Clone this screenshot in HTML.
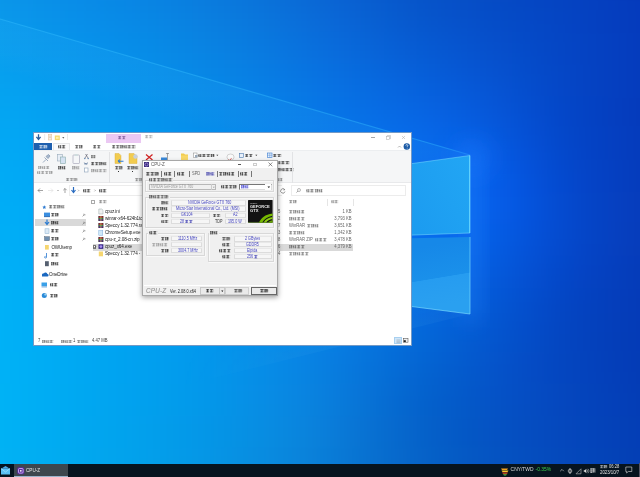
<!DOCTYPE html>
<html><head><meta charset="utf-8">
<style>
*{margin:0;padding:0;box-sizing:border-box}
html,body{width:640px;height:477px;overflow:hidden;background:#0870dc;font-family:"Liberation Sans",sans-serif}
.a{position:absolute}
.t{position:absolute;white-space:nowrap;font-family:"Liberation Sans",sans-serif}
</style></head><body>
<div class="a" style="left:0;top:0;width:640px;height:477px;overflow:hidden"><svg class="a" style="left:-64px;top:-64px;filter:blur(18px)" width="768" height="608" viewBox="-64 -64 768 608">
<rect x="-64" y="-64" width="32" height="32" fill="#0d97e9"/>
<rect x="-32" y="-64" width="32" height="32" fill="#0d93e7"/>
<rect x="0" y="-64" width="32" height="32" fill="#0c8ee6"/>
<rect x="32" y="-64" width="32" height="32" fill="#0c8ae4"/>
<rect x="64" y="-64" width="32" height="32" fill="#0b86e3"/>
<rect x="96" y="-64" width="32" height="32" fill="#0b82e1"/>
<rect x="128" y="-64" width="32" height="32" fill="#0b7edf"/>
<rect x="160" y="-64" width="32" height="32" fill="#0b7adc"/>
<rect x="192" y="-64" width="32" height="32" fill="#0b75da"/>
<rect x="224" y="-64" width="32" height="32" fill="#0b70d7"/>
<rect x="256" y="-64" width="32" height="32" fill="#0b6ad4"/>
<rect x="288" y="-64" width="32" height="32" fill="#0b64d1"/>
<rect x="320" y="-64" width="32" height="32" fill="#0a5ecd"/>
<rect x="352" y="-64" width="32" height="32" fill="#0959ca"/>
<rect x="384" y="-64" width="32" height="32" fill="#0853c7"/>
<rect x="416" y="-64" width="32" height="32" fill="#074fc4"/>
<rect x="448" y="-64" width="32" height="32" fill="#064bc2"/>
<rect x="480" y="-64" width="32" height="32" fill="#0647c1"/>
<rect x="512" y="-64" width="32" height="32" fill="#0644bf"/>
<rect x="544" y="-64" width="32" height="32" fill="#0641be"/>
<rect x="576" y="-64" width="32" height="32" fill="#063dbd"/>
<rect x="608" y="-64" width="32" height="32" fill="#063abb"/>
<rect x="640" y="-64" width="32" height="32" fill="#0636b8"/>
<rect x="672" y="-64" width="32" height="32" fill="#0632b5"/>
<rect x="-64" y="-32" width="32" height="32" fill="#0c9beb"/>
<rect x="-32" y="-32" width="32" height="32" fill="#0c96e9"/>
<rect x="0" y="-32" width="32" height="32" fill="#0b92e8"/>
<rect x="32" y="-32" width="32" height="32" fill="#0a8ee7"/>
<rect x="64" y="-32" width="32" height="32" fill="#0a8ae6"/>
<rect x="96" y="-32" width="32" height="32" fill="#0986e4"/>
<rect x="128" y="-32" width="32" height="32" fill="#0a82e2"/>
<rect x="160" y="-32" width="32" height="32" fill="#0a7edf"/>
<rect x="192" y="-32" width="32" height="32" fill="#0a79dd"/>
<rect x="224" y="-32" width="32" height="32" fill="#0b74da"/>
<rect x="256" y="-32" width="32" height="32" fill="#0b6ed7"/>
<rect x="288" y="-32" width="32" height="32" fill="#0b68d4"/>
<rect x="320" y="-32" width="32" height="32" fill="#0a62d1"/>
<rect x="352" y="-32" width="32" height="32" fill="#095cce"/>
<rect x="384" y="-32" width="32" height="32" fill="#0756ca"/>
<rect x="416" y="-32" width="32" height="32" fill="#0651c7"/>
<rect x="448" y="-32" width="32" height="32" fill="#064dc5"/>
<rect x="480" y="-32" width="32" height="32" fill="#0649c3"/>
<rect x="512" y="-32" width="32" height="32" fill="#0546c2"/>
<rect x="544" y="-32" width="32" height="32" fill="#0543c0"/>
<rect x="576" y="-32" width="32" height="32" fill="#053fbf"/>
<rect x="608" y="-32" width="32" height="32" fill="#053cbd"/>
<rect x="640" y="-32" width="32" height="32" fill="#0538ba"/>
<rect x="672" y="-32" width="32" height="32" fill="#0533b7"/>
<rect x="-64" y="0" width="32" height="32" fill="#0a9eed"/>
<rect x="-32" y="0" width="32" height="32" fill="#0a9aeb"/>
<rect x="0" y="0" width="32" height="32" fill="#0a96ea"/>
<rect x="32" y="0" width="32" height="32" fill="#0992e9"/>
<rect x="64" y="0" width="32" height="32" fill="#088ee9"/>
<rect x="96" y="0" width="32" height="32" fill="#088be7"/>
<rect x="128" y="0" width="32" height="32" fill="#0887e5"/>
<rect x="160" y="0" width="32" height="32" fill="#0983e2"/>
<rect x="192" y="0" width="32" height="32" fill="#0a7edf"/>
<rect x="224" y="0" width="32" height="32" fill="#0a79dd"/>
<rect x="256" y="0" width="32" height="32" fill="#0a73db"/>
<rect x="288" y="0" width="32" height="32" fill="#0a6dd9"/>
<rect x="320" y="0" width="32" height="32" fill="#0a66d6"/>
<rect x="352" y="0" width="32" height="32" fill="#0860d2"/>
<rect x="384" y="0" width="32" height="32" fill="#075ace"/>
<rect x="416" y="0" width="32" height="32" fill="#0654cb"/>
<rect x="448" y="0" width="32" height="32" fill="#0650c9"/>
<rect x="480" y="0" width="32" height="32" fill="#054cc7"/>
<rect x="512" y="0" width="32" height="32" fill="#0548c5"/>
<rect x="544" y="0" width="32" height="32" fill="#0545c3"/>
<rect x="576" y="0" width="32" height="32" fill="#0541c1"/>
<rect x="608" y="0" width="32" height="32" fill="#053dbe"/>
<rect x="640" y="0" width="32" height="32" fill="#0539bb"/>
<rect x="672" y="0" width="32" height="32" fill="#0534b7"/>
<rect x="-64" y="32" width="32" height="32" fill="#09a2ef"/>
<rect x="-32" y="32" width="32" height="32" fill="#089fee"/>
<rect x="0" y="32" width="32" height="32" fill="#089bed"/>
<rect x="32" y="32" width="32" height="32" fill="#0797ec"/>
<rect x="64" y="32" width="32" height="32" fill="#0793eb"/>
<rect x="96" y="32" width="32" height="32" fill="#078fea"/>
<rect x="128" y="32" width="32" height="32" fill="#078ce7"/>
<rect x="160" y="32" width="32" height="32" fill="#0888e5"/>
<rect x="192" y="32" width="32" height="32" fill="#0983e2"/>
<rect x="224" y="32" width="32" height="32" fill="#097ee1"/>
<rect x="256" y="32" width="32" height="32" fill="#0978df"/>
<rect x="288" y="32" width="32" height="32" fill="#0971de"/>
<rect x="320" y="32" width="32" height="32" fill="#096bdb"/>
<rect x="352" y="32" width="32" height="32" fill="#0865d8"/>
<rect x="384" y="32" width="32" height="32" fill="#075ed5"/>
<rect x="416" y="32" width="32" height="32" fill="#0659d2"/>
<rect x="448" y="32" width="32" height="32" fill="#0654cf"/>
<rect x="480" y="32" width="32" height="32" fill="#064fcb"/>
<rect x="512" y="32" width="32" height="32" fill="#054bc8"/>
<rect x="544" y="32" width="32" height="32" fill="#0546c5"/>
<rect x="576" y="32" width="32" height="32" fill="#0542c2"/>
<rect x="608" y="32" width="32" height="32" fill="#053ebf"/>
<rect x="640" y="32" width="32" height="32" fill="#0539bb"/>
<rect x="672" y="32" width="32" height="32" fill="#0535b7"/>
<rect x="-64" y="64" width="32" height="32" fill="#07a6f1"/>
<rect x="-32" y="64" width="32" height="32" fill="#06a3f0"/>
<rect x="0" y="64" width="32" height="32" fill="#069fef"/>
<rect x="32" y="64" width="32" height="32" fill="#069cee"/>
<rect x="64" y="64" width="32" height="32" fill="#0698ed"/>
<rect x="96" y="64" width="32" height="32" fill="#0694ec"/>
<rect x="128" y="64" width="32" height="32" fill="#0690ea"/>
<rect x="160" y="64" width="32" height="32" fill="#078ce8"/>
<rect x="192" y="64" width="32" height="32" fill="#0787e6"/>
<rect x="224" y="64" width="32" height="32" fill="#0882e5"/>
<rect x="256" y="64" width="32" height="32" fill="#087ce4"/>
<rect x="288" y="64" width="32" height="32" fill="#0876e3"/>
<rect x="320" y="64" width="32" height="32" fill="#0870e1"/>
<rect x="352" y="64" width="32" height="32" fill="#076adf"/>
<rect x="384" y="64" width="32" height="32" fill="#0764dc"/>
<rect x="416" y="64" width="32" height="32" fill="#065ed9"/>
<rect x="448" y="64" width="32" height="32" fill="#0658d6"/>
<rect x="480" y="64" width="32" height="32" fill="#0653d1"/>
<rect x="512" y="64" width="32" height="32" fill="#054dcc"/>
<rect x="544" y="64" width="32" height="32" fill="#0547c7"/>
<rect x="576" y="64" width="32" height="32" fill="#0542c2"/>
<rect x="608" y="64" width="32" height="32" fill="#053ebf"/>
<rect x="640" y="64" width="32" height="32" fill="#0539bb"/>
<rect x="672" y="64" width="32" height="32" fill="#0535b7"/>
<rect x="-64" y="96" width="32" height="32" fill="#05aaf4"/>
<rect x="-32" y="96" width="32" height="32" fill="#05a7f3"/>
<rect x="0" y="96" width="32" height="32" fill="#04a4f2"/>
<rect x="32" y="96" width="32" height="32" fill="#04a0f1"/>
<rect x="64" y="96" width="32" height="32" fill="#049cef"/>
<rect x="96" y="96" width="32" height="32" fill="#0498ee"/>
<rect x="128" y="96" width="32" height="32" fill="#0594ec"/>
<rect x="160" y="96" width="32" height="32" fill="#0690ea"/>
<rect x="192" y="96" width="32" height="32" fill="#068be9"/>
<rect x="224" y="96" width="32" height="32" fill="#0786e8"/>
<rect x="256" y="96" width="32" height="32" fill="#0780e8"/>
<rect x="288" y="96" width="32" height="32" fill="#077ae7"/>
<rect x="320" y="96" width="32" height="32" fill="#0774e6"/>
<rect x="352" y="96" width="32" height="32" fill="#076ee5"/>
<rect x="384" y="96" width="32" height="32" fill="#0769e4"/>
<rect x="416" y="96" width="32" height="32" fill="#0763e2"/>
<rect x="448" y="96" width="32" height="32" fill="#065dde"/>
<rect x="480" y="96" width="32" height="32" fill="#0656d8"/>
<rect x="512" y="96" width="32" height="32" fill="#054ed0"/>
<rect x="544" y="96" width="32" height="32" fill="#0447c9"/>
<rect x="576" y="96" width="32" height="32" fill="#0442c3"/>
<rect x="608" y="96" width="32" height="32" fill="#053dbe"/>
<rect x="640" y="96" width="32" height="32" fill="#0539ba"/>
<rect x="672" y="96" width="32" height="32" fill="#0535b6"/>
<rect x="-64" y="128" width="32" height="32" fill="#03adf5"/>
<rect x="-32" y="128" width="32" height="32" fill="#03aaf4"/>
<rect x="0" y="128" width="32" height="32" fill="#03a7f4"/>
<rect x="32" y="128" width="32" height="32" fill="#03a3f2"/>
<rect x="64" y="128" width="32" height="32" fill="#039ff1"/>
<rect x="96" y="128" width="32" height="32" fill="#039bf0"/>
<rect x="128" y="128" width="32" height="32" fill="#0497ee"/>
<rect x="160" y="128" width="32" height="32" fill="#0593ed"/>
<rect x="192" y="128" width="32" height="32" fill="#058eec"/>
<rect x="224" y="128" width="32" height="32" fill="#0689eb"/>
<rect x="256" y="128" width="32" height="32" fill="#0684eb"/>
<rect x="288" y="128" width="32" height="32" fill="#067eeb"/>
<rect x="320" y="128" width="32" height="32" fill="#0778eb"/>
<rect x="352" y="128" width="32" height="32" fill="#0773eb"/>
<rect x="384" y="128" width="32" height="32" fill="#076deb"/>
<rect x="416" y="128" width="32" height="32" fill="#0768ea"/>
<rect x="448" y="128" width="32" height="32" fill="#0661e6"/>
<rect x="480" y="128" width="32" height="32" fill="#065ae0"/>
<rect x="512" y="128" width="32" height="32" fill="#0550d6"/>
<rect x="544" y="128" width="32" height="32" fill="#0448cb"/>
<rect x="576" y="128" width="32" height="32" fill="#0442c4"/>
<rect x="608" y="128" width="32" height="32" fill="#053ebf"/>
<rect x="640" y="128" width="32" height="32" fill="#0539ba"/>
<rect x="672" y="128" width="32" height="32" fill="#0635b6"/>
<rect x="-64" y="160" width="32" height="32" fill="#02b0f7"/>
<rect x="-32" y="160" width="32" height="32" fill="#01adf6"/>
<rect x="0" y="160" width="32" height="32" fill="#01a9f5"/>
<rect x="32" y="160" width="32" height="32" fill="#01a6f4"/>
<rect x="64" y="160" width="32" height="32" fill="#02a2f3"/>
<rect x="96" y="160" width="32" height="32" fill="#029ef1"/>
<rect x="128" y="160" width="32" height="32" fill="#039af0"/>
<rect x="160" y="160" width="32" height="32" fill="#0495ef"/>
<rect x="192" y="160" width="32" height="32" fill="#0491ee"/>
<rect x="224" y="160" width="32" height="32" fill="#058cee"/>
<rect x="256" y="160" width="32" height="32" fill="#0586ee"/>
<rect x="288" y="160" width="32" height="32" fill="#0681ee"/>
<rect x="320" y="160" width="32" height="32" fill="#067bee"/>
<rect x="352" y="160" width="32" height="32" fill="#0676ef"/>
<rect x="384" y="160" width="32" height="32" fill="#0670ef"/>
<rect x="416" y="160" width="32" height="32" fill="#066bef"/>
<rect x="448" y="160" width="32" height="32" fill="#0665ee"/>
<rect x="480" y="160" width="32" height="32" fill="#065de8"/>
<rect x="512" y="160" width="32" height="32" fill="#0553dc"/>
<rect x="544" y="160" width="32" height="32" fill="#044acf"/>
<rect x="576" y="160" width="32" height="32" fill="#0543c6"/>
<rect x="608" y="160" width="32" height="32" fill="#053ebf"/>
<rect x="640" y="160" width="32" height="32" fill="#063aba"/>
<rect x="672" y="160" width="32" height="32" fill="#0635b5"/>
<rect x="-64" y="192" width="32" height="32" fill="#01b2f8"/>
<rect x="-32" y="192" width="32" height="32" fill="#00aff7"/>
<rect x="0" y="192" width="32" height="32" fill="#00acf6"/>
<rect x="32" y="192" width="32" height="32" fill="#00a8f5"/>
<rect x="64" y="192" width="32" height="32" fill="#01a4f4"/>
<rect x="96" y="192" width="32" height="32" fill="#01a0f2"/>
<rect x="128" y="192" width="32" height="32" fill="#029cf1"/>
<rect x="160" y="192" width="32" height="32" fill="#0398f0"/>
<rect x="192" y="192" width="32" height="32" fill="#0493f0"/>
<rect x="224" y="192" width="32" height="32" fill="#048eef"/>
<rect x="256" y="192" width="32" height="32" fill="#0588ef"/>
<rect x="288" y="192" width="32" height="32" fill="#0683ef"/>
<rect x="320" y="192" width="32" height="32" fill="#067def"/>
<rect x="352" y="192" width="32" height="32" fill="#0678f0"/>
<rect x="384" y="192" width="32" height="32" fill="#0672f0"/>
<rect x="416" y="192" width="32" height="32" fill="#066cf1"/>
<rect x="448" y="192" width="32" height="32" fill="#0666ef"/>
<rect x="480" y="192" width="32" height="32" fill="#065eea"/>
<rect x="512" y="192" width="32" height="32" fill="#0554de"/>
<rect x="544" y="192" width="32" height="32" fill="#054bd1"/>
<rect x="576" y="192" width="32" height="32" fill="#0544c7"/>
<rect x="608" y="192" width="32" height="32" fill="#063fbf"/>
<rect x="640" y="192" width="32" height="32" fill="#063aba"/>
<rect x="672" y="192" width="32" height="32" fill="#0636b5"/>
<rect x="-64" y="224" width="32" height="32" fill="#00b4f8"/>
<rect x="-32" y="224" width="32" height="32" fill="#00b0f7"/>
<rect x="0" y="224" width="32" height="32" fill="#00adf6"/>
<rect x="32" y="224" width="32" height="32" fill="#00a9f5"/>
<rect x="64" y="224" width="32" height="32" fill="#00a6f4"/>
<rect x="96" y="224" width="32" height="32" fill="#01a2f3"/>
<rect x="128" y="224" width="32" height="32" fill="#019ef2"/>
<rect x="160" y="224" width="32" height="32" fill="#0299f1"/>
<rect x="192" y="224" width="32" height="32" fill="#0394f0"/>
<rect x="224" y="224" width="32" height="32" fill="#048fef"/>
<rect x="256" y="224" width="32" height="32" fill="#058aef"/>
<rect x="288" y="224" width="32" height="32" fill="#0584ef"/>
<rect x="320" y="224" width="32" height="32" fill="#067eee"/>
<rect x="352" y="224" width="32" height="32" fill="#0678ee"/>
<rect x="384" y="224" width="32" height="32" fill="#0672ee"/>
<rect x="416" y="224" width="32" height="32" fill="#066ced"/>
<rect x="448" y="224" width="32" height="32" fill="#0665eb"/>
<rect x="480" y="224" width="32" height="32" fill="#055de4"/>
<rect x="512" y="224" width="32" height="32" fill="#0553da"/>
<rect x="544" y="224" width="32" height="32" fill="#054bcf"/>
<rect x="576" y="224" width="32" height="32" fill="#0544c5"/>
<rect x="608" y="224" width="32" height="32" fill="#063fbe"/>
<rect x="640" y="224" width="32" height="32" fill="#063ab9"/>
<rect x="672" y="224" width="32" height="32" fill="#0636b4"/>
<rect x="-64" y="256" width="32" height="32" fill="#00b5f9"/>
<rect x="-32" y="256" width="32" height="32" fill="#00b2f8"/>
<rect x="0" y="256" width="32" height="32" fill="#00aef7"/>
<rect x="32" y="256" width="32" height="32" fill="#00abf5"/>
<rect x="64" y="256" width="32" height="32" fill="#00a7f4"/>
<rect x="96" y="256" width="32" height="32" fill="#00a3f3"/>
<rect x="128" y="256" width="32" height="32" fill="#019ff2"/>
<rect x="160" y="256" width="32" height="32" fill="#029af1"/>
<rect x="192" y="256" width="32" height="32" fill="#0396f0"/>
<rect x="224" y="256" width="32" height="32" fill="#0490ef"/>
<rect x="256" y="256" width="32" height="32" fill="#058bee"/>
<rect x="288" y="256" width="32" height="32" fill="#0585ed"/>
<rect x="320" y="256" width="32" height="32" fill="#067fec"/>
<rect x="352" y="256" width="32" height="32" fill="#0678ea"/>
<rect x="384" y="256" width="32" height="32" fill="#0571e9"/>
<rect x="416" y="256" width="32" height="32" fill="#056ae7"/>
<rect x="448" y="256" width="32" height="32" fill="#0562e3"/>
<rect x="480" y="256" width="32" height="32" fill="#055adc"/>
<rect x="512" y="256" width="32" height="32" fill="#0551d3"/>
<rect x="544" y="256" width="32" height="32" fill="#0448ca"/>
<rect x="576" y="256" width="32" height="32" fill="#0542c2"/>
<rect x="608" y="256" width="32" height="32" fill="#053ebc"/>
<rect x="640" y="256" width="32" height="32" fill="#0639b7"/>
<rect x="672" y="256" width="32" height="32" fill="#0635b3"/>
<rect x="-64" y="288" width="32" height="32" fill="#00b6f9"/>
<rect x="-32" y="288" width="32" height="32" fill="#00b3f8"/>
<rect x="0" y="288" width="32" height="32" fill="#00aff6"/>
<rect x="32" y="288" width="32" height="32" fill="#00abf5"/>
<rect x="64" y="288" width="32" height="32" fill="#00a8f4"/>
<rect x="96" y="288" width="32" height="32" fill="#00a4f3"/>
<rect x="128" y="288" width="32" height="32" fill="#01a0f1"/>
<rect x="160" y="288" width="32" height="32" fill="#029bf0"/>
<rect x="192" y="288" width="32" height="32" fill="#0396ef"/>
<rect x="224" y="288" width="32" height="32" fill="#0491ed"/>
<rect x="256" y="288" width="32" height="32" fill="#058bec"/>
<rect x="288" y="288" width="32" height="32" fill="#0685ea"/>
<rect x="320" y="288" width="32" height="32" fill="#067ee8"/>
<rect x="352" y="288" width="32" height="32" fill="#0677e5"/>
<rect x="384" y="288" width="32" height="32" fill="#056fe2"/>
<rect x="416" y="288" width="32" height="32" fill="#0567df"/>
<rect x="448" y="288" width="32" height="32" fill="#045fda"/>
<rect x="480" y="288" width="32" height="32" fill="#0457d4"/>
<rect x="512" y="288" width="32" height="32" fill="#044ecd"/>
<rect x="544" y="288" width="32" height="32" fill="#0446c4"/>
<rect x="576" y="288" width="32" height="32" fill="#0441be"/>
<rect x="608" y="288" width="32" height="32" fill="#053dba"/>
<rect x="640" y="288" width="32" height="32" fill="#0539b6"/>
<rect x="672" y="288" width="32" height="32" fill="#0535b2"/>
<rect x="-64" y="320" width="32" height="32" fill="#00b7f9"/>
<rect x="-32" y="320" width="32" height="32" fill="#00b3f7"/>
<rect x="0" y="320" width="32" height="32" fill="#00aff6"/>
<rect x="32" y="320" width="32" height="32" fill="#00acf5"/>
<rect x="64" y="320" width="32" height="32" fill="#00a8f3"/>
<rect x="96" y="320" width="32" height="32" fill="#00a4f2"/>
<rect x="128" y="320" width="32" height="32" fill="#01a0f0"/>
<rect x="160" y="320" width="32" height="32" fill="#029cef"/>
<rect x="192" y="320" width="32" height="32" fill="#0397ed"/>
<rect x="224" y="320" width="32" height="32" fill="#0491eb"/>
<rect x="256" y="320" width="32" height="32" fill="#068be9"/>
<rect x="288" y="320" width="32" height="32" fill="#0785e6"/>
<rect x="320" y="320" width="32" height="32" fill="#077de3"/>
<rect x="352" y="320" width="32" height="32" fill="#0675df"/>
<rect x="384" y="320" width="32" height="32" fill="#056ddb"/>
<rect x="416" y="320" width="32" height="32" fill="#0465d7"/>
<rect x="448" y="320" width="32" height="32" fill="#045dd3"/>
<rect x="480" y="320" width="32" height="32" fill="#0455ce"/>
<rect x="512" y="320" width="32" height="32" fill="#044dc8"/>
<rect x="544" y="320" width="32" height="32" fill="#0446c1"/>
<rect x="576" y="320" width="32" height="32" fill="#0441bc"/>
<rect x="608" y="320" width="32" height="32" fill="#043db8"/>
<rect x="640" y="320" width="32" height="32" fill="#0539b5"/>
<rect x="672" y="320" width="32" height="32" fill="#0535b1"/>
<rect x="-64" y="352" width="32" height="32" fill="#00b7f8"/>
<rect x="-32" y="352" width="32" height="32" fill="#00b3f7"/>
<rect x="0" y="352" width="32" height="32" fill="#00b0f5"/>
<rect x="32" y="352" width="32" height="32" fill="#00acf4"/>
<rect x="64" y="352" width="32" height="32" fill="#00a8f2"/>
<rect x="96" y="352" width="32" height="32" fill="#00a4f1"/>
<rect x="128" y="352" width="32" height="32" fill="#01a0ef"/>
<rect x="160" y="352" width="32" height="32" fill="#029ced"/>
<rect x="192" y="352" width="32" height="32" fill="#0397eb"/>
<rect x="224" y="352" width="32" height="32" fill="#0591e9"/>
<rect x="256" y="352" width="32" height="32" fill="#078be6"/>
<rect x="288" y="352" width="32" height="32" fill="#0884e3"/>
<rect x="320" y="352" width="32" height="32" fill="#087cdf"/>
<rect x="352" y="352" width="32" height="32" fill="#0673da"/>
<rect x="384" y="352" width="32" height="32" fill="#056ad5"/>
<rect x="416" y="352" width="32" height="32" fill="#0462d0"/>
<rect x="448" y="352" width="32" height="32" fill="#045acd"/>
<rect x="480" y="352" width="32" height="32" fill="#0553ca"/>
<rect x="512" y="352" width="32" height="32" fill="#054cc5"/>
<rect x="544" y="352" width="32" height="32" fill="#0446c0"/>
<rect x="576" y="352" width="32" height="32" fill="#0442bc"/>
<rect x="608" y="352" width="32" height="32" fill="#043db8"/>
<rect x="640" y="352" width="32" height="32" fill="#043ab4"/>
<rect x="672" y="352" width="32" height="32" fill="#0436b1"/>
<rect x="-64" y="384" width="32" height="32" fill="#00b8f8"/>
<rect x="-32" y="384" width="32" height="32" fill="#00b4f6"/>
<rect x="0" y="384" width="32" height="32" fill="#00b0f5"/>
<rect x="32" y="384" width="32" height="32" fill="#00acf3"/>
<rect x="64" y="384" width="32" height="32" fill="#00a8f1"/>
<rect x="96" y="384" width="32" height="32" fill="#01a4f0"/>
<rect x="128" y="384" width="32" height="32" fill="#01a0ee"/>
<rect x="160" y="384" width="32" height="32" fill="#029cec"/>
<rect x="192" y="384" width="32" height="32" fill="#0397e9"/>
<rect x="224" y="384" width="32" height="32" fill="#0691e7"/>
<rect x="256" y="384" width="32" height="32" fill="#088be4"/>
<rect x="288" y="384" width="32" height="32" fill="#0984e0"/>
<rect x="320" y="384" width="32" height="32" fill="#097cdb"/>
<rect x="352" y="384" width="32" height="32" fill="#0772d6"/>
<rect x="384" y="384" width="32" height="32" fill="#0568d0"/>
<rect x="416" y="384" width="32" height="32" fill="#045fcb"/>
<rect x="448" y="384" width="32" height="32" fill="#0459c9"/>
<rect x="480" y="384" width="32" height="32" fill="#0552c6"/>
<rect x="512" y="384" width="32" height="32" fill="#054dc3"/>
<rect x="544" y="384" width="32" height="32" fill="#0547bf"/>
<rect x="576" y="384" width="32" height="32" fill="#0443bb"/>
<rect x="608" y="384" width="32" height="32" fill="#043fb8"/>
<rect x="640" y="384" width="32" height="32" fill="#043bb4"/>
<rect x="672" y="384" width="32" height="32" fill="#0436b1"/>
<rect x="-64" y="416" width="32" height="32" fill="#00b8f7"/>
<rect x="-32" y="416" width="32" height="32" fill="#00b4f5"/>
<rect x="0" y="416" width="32" height="32" fill="#00b0f4"/>
<rect x="32" y="416" width="32" height="32" fill="#00acf2"/>
<rect x="64" y="416" width="32" height="32" fill="#01a8f0"/>
<rect x="96" y="416" width="32" height="32" fill="#01a4ee"/>
<rect x="128" y="416" width="32" height="32" fill="#02a0ec"/>
<rect x="160" y="416" width="32" height="32" fill="#039bea"/>
<rect x="192" y="416" width="32" height="32" fill="#0496e7"/>
<rect x="224" y="416" width="32" height="32" fill="#0691e4"/>
<rect x="256" y="416" width="32" height="32" fill="#088be1"/>
<rect x="288" y="416" width="32" height="32" fill="#0a84dd"/>
<rect x="320" y="416" width="32" height="32" fill="#0a7bd8"/>
<rect x="352" y="416" width="32" height="32" fill="#0871d2"/>
<rect x="384" y="416" width="32" height="32" fill="#0668cd"/>
<rect x="416" y="416" width="32" height="32" fill="#055fc8"/>
<rect x="448" y="416" width="32" height="32" fill="#0458c6"/>
<rect x="480" y="416" width="32" height="32" fill="#0552c3"/>
<rect x="512" y="416" width="32" height="32" fill="#054dc0"/>
<rect x="544" y="416" width="32" height="32" fill="#0548bd"/>
<rect x="576" y="416" width="32" height="32" fill="#0444ba"/>
<rect x="608" y="416" width="32" height="32" fill="#0440b7"/>
<rect x="640" y="416" width="32" height="32" fill="#043cb4"/>
<rect x="672" y="416" width="32" height="32" fill="#0437b0"/>
<rect x="-64" y="448" width="32" height="32" fill="#00b9f6"/>
<rect x="-32" y="448" width="32" height="32" fill="#00b4f5"/>
<rect x="0" y="448" width="32" height="32" fill="#01b0f3"/>
<rect x="32" y="448" width="32" height="32" fill="#01acf1"/>
<rect x="64" y="448" width="32" height="32" fill="#01a8ef"/>
<rect x="96" y="448" width="32" height="32" fill="#02a4ed"/>
<rect x="128" y="448" width="32" height="32" fill="#02a0ea"/>
<rect x="160" y="448" width="32" height="32" fill="#049be8"/>
<rect x="192" y="448" width="32" height="32" fill="#0596e5"/>
<rect x="224" y="448" width="32" height="32" fill="#0790e2"/>
<rect x="256" y="448" width="32" height="32" fill="#098ade"/>
<rect x="288" y="448" width="32" height="32" fill="#0a83da"/>
<rect x="320" y="448" width="32" height="32" fill="#097ad5"/>
<rect x="352" y="448" width="32" height="32" fill="#0871d0"/>
<rect x="384" y="448" width="32" height="32" fill="#0768cb"/>
<rect x="416" y="448" width="32" height="32" fill="#0560c7"/>
<rect x="448" y="448" width="32" height="32" fill="#0559c4"/>
<rect x="480" y="448" width="32" height="32" fill="#0553c1"/>
<rect x="512" y="448" width="32" height="32" fill="#054ebf"/>
<rect x="544" y="448" width="32" height="32" fill="#0549bc"/>
<rect x="576" y="448" width="32" height="32" fill="#0445b9"/>
<rect x="608" y="448" width="32" height="32" fill="#0441b6"/>
<rect x="640" y="448" width="32" height="32" fill="#043cb3"/>
<rect x="672" y="448" width="32" height="32" fill="#0438b0"/>
<rect x="-64" y="480" width="32" height="32" fill="#00b9f6"/>
<rect x="-32" y="480" width="32" height="32" fill="#01b5f4"/>
<rect x="0" y="480" width="32" height="32" fill="#01b1f2"/>
<rect x="32" y="480" width="32" height="32" fill="#01acf0"/>
<rect x="64" y="480" width="32" height="32" fill="#02a8ed"/>
<rect x="96" y="480" width="32" height="32" fill="#02a4eb"/>
<rect x="128" y="480" width="32" height="32" fill="#039fe9"/>
<rect x="160" y="480" width="32" height="32" fill="#049ae6"/>
<rect x="192" y="480" width="32" height="32" fill="#0695e3"/>
<rect x="224" y="480" width="32" height="32" fill="#078fe0"/>
<rect x="256" y="480" width="32" height="32" fill="#0889dc"/>
<rect x="288" y="480" width="32" height="32" fill="#0982d8"/>
<rect x="320" y="480" width="32" height="32" fill="#097ad3"/>
<rect x="352" y="480" width="32" height="32" fill="#0871ce"/>
<rect x="384" y="480" width="32" height="32" fill="#0769ca"/>
<rect x="416" y="480" width="32" height="32" fill="#0661c6"/>
<rect x="448" y="480" width="32" height="32" fill="#055ac2"/>
<rect x="480" y="480" width="32" height="32" fill="#0554c0"/>
<rect x="512" y="480" width="32" height="32" fill="#054fbd"/>
<rect x="544" y="480" width="32" height="32" fill="#054abb"/>
<rect x="576" y="480" width="32" height="32" fill="#0446b8"/>
<rect x="608" y="480" width="32" height="32" fill="#0442b5"/>
<rect x="640" y="480" width="32" height="32" fill="#043db2"/>
<rect x="672" y="480" width="32" height="32" fill="#0439af"/>
<rect x="-64" y="512" width="32" height="32" fill="#01baf5"/>
<rect x="-32" y="512" width="32" height="32" fill="#01b5f3"/>
<rect x="0" y="512" width="32" height="32" fill="#01b1f1"/>
<rect x="32" y="512" width="32" height="32" fill="#02adee"/>
<rect x="64" y="512" width="32" height="32" fill="#02a8ec"/>
<rect x="96" y="512" width="32" height="32" fill="#03a4ea"/>
<rect x="128" y="512" width="32" height="32" fill="#049fe7"/>
<rect x="160" y="512" width="32" height="32" fill="#059ae4"/>
<rect x="192" y="512" width="32" height="32" fill="#0695e1"/>
<rect x="224" y="512" width="32" height="32" fill="#078fde"/>
<rect x="256" y="512" width="32" height="32" fill="#0888da"/>
<rect x="288" y="512" width="32" height="32" fill="#0981d6"/>
<rect x="320" y="512" width="32" height="32" fill="#097ad1"/>
<rect x="352" y="512" width="32" height="32" fill="#0872cd"/>
<rect x="384" y="512" width="32" height="32" fill="#076ac9"/>
<rect x="416" y="512" width="32" height="32" fill="#0663c5"/>
<rect x="448" y="512" width="32" height="32" fill="#065cc2"/>
<rect x="480" y="512" width="32" height="32" fill="#0556bf"/>
<rect x="512" y="512" width="32" height="32" fill="#0550bc"/>
<rect x="544" y="512" width="32" height="32" fill="#054cb9"/>
<rect x="576" y="512" width="32" height="32" fill="#0447b7"/>
<rect x="608" y="512" width="32" height="32" fill="#0442b4"/>
<rect x="640" y="512" width="32" height="32" fill="#043eb1"/>
<rect x="672" y="512" width="32" height="32" fill="#043aae"/>
</svg></div>
<svg class="a" style="left:0;top:0" width="640" height="477" viewBox="0 0 640 477">
  <defs>
    <linearGradient id="w1" gradientUnits="userSpaceOnUse" x1="235" y1="87" x2="221" y2="135">
      <stop offset="0" stop-color="#40c0ff" stop-opacity=".10"/><stop offset="1" stop-color="#9fe0ff" stop-opacity="0"/>
    </linearGradient>
    <linearGradient id="w2" gradientUnits="userSpaceOnUse" x1="235" y1="372.75" x2="223" y2="324">
      <stop offset="0" stop-color="#9fe0ff" stop-opacity=".05"/><stop offset="1" stop-color="#9fe0ff" stop-opacity="0"/>
    </linearGradient>
    <linearGradient id="up" gradientUnits="userSpaceOnUse" x1="470" y1="155" x2="330" y2="235">
      <stop offset="0" stop-color="#22a6f4"/><stop offset=".5" stop-color="#1c9cf0"/><stop offset="1" stop-color="#1894ec"/>
    </linearGradient>
    <linearGradient id="lo" gradientUnits="userSpaceOnUse" x1="400" y1="250" x2="410" y2="310">
      <stop offset="0" stop-color="#1688e8"/><stop offset=".55" stop-color="#1a90ea"/><stop offset=".56" stop-color="#269cf0"/><stop offset="1" stop-color="#2aa0f0"/>
    </linearGradient>
    <linearGradient id="m2g" gradientUnits="userSpaceOnUse" x1="180" y1="0" x2="330" y2="0"><stop offset="0" stop-color="#fff" stop-opacity="0"/><stop offset="1" stop-color="#fff" stop-opacity="1"/></linearGradient>
    <mask id="m2" maskUnits="userSpaceOnUse" x="0" y="0" width="640" height="477"><rect x="0" y="0" width="640" height="477" fill="url(#m2g)"/></mask>
    <filter id="gl" x="-50%" y="-20%" width="200%" height="140%"><feGaussianBlur stdDeviation="11"/></filter>
    <filter id="sl" x="-5%" y="-50%" width="110%" height="200%"><feGaussianBlur stdDeviation=".6"/></filter>
  </defs>
  <polygon points="0,19 470,155 0,230" fill="url(#w1)"/>
  <polygon points="470,314 0,250 0,431.5" fill="url(#w2)" mask="url(#m2)"/>
  <line x1="0" y1="19" x2="470" y2="155" stroke="#38c0ff" stroke-width="1.3" opacity=".4" filter="url(#sl)"/>
  <rect x="460" y="150" width="20" height="170" fill="#2a8aff" opacity=".35" filter="url(#gl)"/>
  <circle cx="472" cy="158" r="22" fill="#1a78ff" opacity=".3" filter="url(#gl)"/>
  <polygon points="330,175 470,155.5 470,233 330,238" fill="url(#up)"/>
  <polygon points="330,240 470,237 470,314 330,296" fill="url(#lo)"/>
  <polygon points="330,175 470,155.5 470,233 330,238" fill="none" stroke="#80e0ff" stroke-width=".9" opacity=".55"/>
  <polyline points="330,296 470,314 470,237" fill="none" stroke="#80e0ff" stroke-width=".9" opacity=".7"/>
  <line x1="469.6" y1="155.5" x2="469.6" y2="233" stroke="#70dcff" stroke-width="1" opacity=".8"/>
</svg>

<div class="a" style="left:0;top:0;width:640px;height:477px;filter:blur(.3px)">
<div class="a" style="left:32.6px;top:132px;width:379.4px;height:214px;background:#fff;border:1px solid rgba(0,70,150,.55)"></div>
<svg class="a" style="left:34px;top:133px" width="40" height="9" viewBox="0 0 40 9"><path d="M4.5 1.2v4.3M2.4 3.9l2.1 2.6 2.1-2.6" stroke="#2d5f9e" stroke-width="1.3" fill="none"/><rect x="10.5" y="1" width="0.6" height="6" fill="#ddd"/><rect x="14.3" y="1.5" width="3.4" height="5.5" fill="#f6ede2" stroke="#e2c4a4" stroke-width=".6"/><path d="M15 3.2h2M15 4.5h2" stroke="#d0b090" stroke-width=".4"/><rect x="20.8" y="2.5" width="5" height="4.6" fill="#f2da70"/><rect x="22" y="3.8" width="2.6" height="2" fill="#fff2b0"/><path d="M28.2 4.2h2.2l-1.1 1.4z" fill="#333"/><rect x="33" y="1" width="0.6" height="6" fill="#ddd"/></svg>
<div class="a" style="left:106.2px;top:134.3px;width:34.4px;height:8.6px;background:#ebc8f3"></div>
<svg class="a" style="left:118px;top:136.40px" width="9.00" height="3.70"><g transform="scale(0.952,0.889) translate(-0.0,0)"><rect x="0.0" width="8.40" height="3.6" fill="url(#p0)" opacity="0.78"/></g></svg>
<svg class="a" style="left:145px;top:135.40px" width="8.60" height="3.70"><g transform="scale(0.905,0.889) translate(-0.0,0)"><rect x="0.0" width="8.40" height="3.6" fill="url(#p1)" opacity="0.39"/></g></svg>
<div class="a" style="left:371px;top:137.2px;width:3.8px;height:0.5px;background:#a8a8a8"></div>
<svg class="a" style="left:385.5px;top:134.8px" width="5" height="5" viewBox="0 0 5 5"><rect x=".5" y="1.3" width="3.2" height="3.2" fill="none" stroke="#aaa" stroke-width=".5"/><path d="M1.3 1.3V.5h3.2v3.2h-.8" fill="none" stroke="#aaa" stroke-width=".5"/></svg>
<svg class="a" style="left:401px;top:135px" width="5" height="5" viewBox="0 0 5 5"><path d="M1 1l3 3M4 1L1 4" stroke="#a8a8a8" stroke-width=".5"/></svg>
<div class="a" style="left:33.6px;top:142.6px;width:18.8px;height:7.3px;background:#1e5fae"></div>
<svg class="a" style="left:39px;top:144.80px" width="9.40" height="3.90"><g transform="scale(1.000,0.944) translate(-4.2,0)"><rect x="4.2" width="8.40" height="3.6" fill="url(#p2)" opacity="1.00"/></g></svg>
<div class="a" style="left:53px;top:143px;width:16.5px;height:7.5px;background:#fbfbfc;border:0.5px solid #e6e7e9;border-bottom:none"></div>
<svg class="a" style="left:57.5px;top:144.80px" width="8.80" height="3.90"><g transform="scale(0.929,0.944) translate(-12.6,0)"><rect x="12.6" width="8.40" height="3.6" fill="url(#p1)" opacity="0.85"/></g></svg>
<svg class="a" style="left:75px;top:144.80px" width="9.00" height="3.90"><g transform="scale(0.952,0.944) translate(-4.2,0)"><rect x="4.2" width="8.40" height="3.6" fill="url(#p1)" opacity="0.78"/></g></svg>
<svg class="a" style="left:92.5px;top:144.80px" width="9.00" height="3.90"><g transform="scale(0.952,0.944) translate(-0.0,0)"><rect x="0.0" width="8.40" height="3.6" fill="url(#p1)" opacity="0.78"/></g></svg>
<svg class="a" style="left:112px;top:144.80px" width="24.40" height="3.90"><g transform="scale(0.929,0.944) translate(-0.0,0)"><rect x="0.0" width="25.20" height="3.6" fill="url(#p1)" opacity="0.78"/></g></svg>
<div class="a" style="left:34px;top:150px;width:377px;height:33.4px;background:#f5f6f7;border-top:0.5px solid #eceef0;border-bottom:0.5px solid #e8e9eb"></div>
<svg class="a" style="left:36px;top:152px" width="74" height="22" viewBox="0 0 74 22"><path d="M7 10.5l3-3M8.5 5.5l3.5 3.5M10 4.5l2 2 2-2.5-1.5-1.5z" stroke="#8fa0b8" stroke-width=".9" fill="#a8b8cc"/><rect x="21.5" y="2.5" width="5" height="6.5" fill="#e8eef6" stroke="#9ab" stroke-width=".6"/><rect x="24.5" y="5" width="5" height="6.5" fill="#d4e2f2" stroke="#8aa" stroke-width=".6"/><rect x="37" y="3" width="6.5" height="8.5" rx=".6" fill="#f4f6f8" stroke="#aab" stroke-width=".7"/><rect x="38.8" y="2.3" width="3" height="1.6" fill="#cdd"/><path d="M49 6l2.5-4M52 6l-2.5-4" stroke="#556" stroke-width=".6"/><circle cx="48.8" cy="6.5" r=".8" fill="#6a8ab0"/><circle cx="52.2" cy="6.5" r=".8" fill="#6a8ab0"/><path d="M48.3 10.5l.8 2 .8-1.5.8 1.5.8-2" stroke="#3a5a88" stroke-width=".6" fill="none"/><rect x="48.5" y="16" width="3.5" height="4" fill="#fff" stroke="#8aa0b8" stroke-width=".6"/></svg>
<svg class="a" style="left:38px;top:165.80px" width="13.00" height="3.70"><g transform="scale(0.952,0.889) translate(-8.4,0)"><rect x="8.4" width="12.60" height="3.6" fill="url(#p1)" opacity="0.43"/></g></svg>
<svg class="a" style="left:37.4px;top:170.80px" width="17.00" height="3.70"><g transform="scale(0.952,0.889) translate(-12.6,0)"><rect x="12.6" width="16.80" height="3.6" fill="url(#p1)" opacity="0.43"/></g></svg>
<svg class="a" style="left:57.5px;top:166.30px" width="9.00" height="3.90"><g transform="scale(0.952,0.944) translate(-8.4,0)"><rect x="8.4" width="8.40" height="3.6" fill="url(#p1)" opacity="0.85"/></g></svg>
<svg class="a" style="left:71.8px;top:166.30px" width="8.60" height="3.90"><g transform="scale(0.905,0.944) translate(-8.4,0)"><rect x="8.4" width="8.40" height="3.6" fill="url(#p1)" opacity="0.46"/></g></svg>
<svg class="a" style="left:90.5px;top:154.90px" width="5.40" height="3.70"><g transform="scale(0.524,0.889) translate(-0.0,0)"><rect x="0.0" width="8.40" height="3.6" fill="url(#p1)" opacity="0.85"/></g></svg>
<svg class="a" style="left:90.5px;top:162.00px" width="16.60" height="3.70"><g transform="scale(0.929,0.889) translate(-0.0,0)"><rect x="0.0" width="16.80" height="3.6" fill="url(#p1)" opacity="0.85"/></g></svg>
<svg class="a" style="left:90.5px;top:168.90px" width="16.60" height="3.70"><g transform="scale(0.929,0.889) translate(-8.4,0)"><rect x="8.4" width="16.80" height="3.6" fill="url(#p1)" opacity="0.46"/></g></svg>
<svg class="a" style="left:66px;top:177.70px" width="12.40" height="3.70"><g transform="scale(0.905,0.889) translate(-0.0,0)"><rect x="0.0" width="12.60" height="3.6" fill="url(#p1)" opacity="0.54"/></g></svg>
<div class="a" style="left:108.6px;top:152px;width:0.6px;height:31px;background:#e2e3e5"></div>
<svg class="a" style="left:112px;top:152px" width="80" height="12" viewBox="0 0 80 12"><path d="M3 1.5h4l2 2v8h-6z" fill="#f2cc50" stroke="#d8a830" stroke-width=".4"/><path d="M6 9.2h5.5M6 9.2l1.8-1.5M6 9.2l1.8 1.5" stroke="#2a7ad8" stroke-width="1.1" fill="none"/><path d="M17 1.5h5l3 3v7h-8z" fill="#f2cc50" stroke="#d8a830" stroke-width=".4"/><circle cx="23.5" cy="4.5" r="2.2" fill="#c8d0dc"/><path d="M34 2.5l6.5 5.5M40.5 2.5l-6.5 5.5" stroke="#d02020" stroke-width="1.2"/><rect x="49" y="5.5" width="6" height="3" fill="#3a88d8"/><path d="M55.5 1.5v8M54 1.5h3M54 9.5h3" stroke="#555" stroke-width=".5"/><path d="M69 1.5h3l1 1h3v6.5h-7z" fill="#f2cc50"/><path d="M69 3.5h7v5.5h-7z" fill="#f8d868"/></svg>
<svg class="a" style="left:114.5px;top:166.00px" width="8.60" height="3.90"><g transform="scale(0.905,0.944) translate(-4.2,0)"><rect x="4.2" width="8.40" height="3.6" fill="url(#p1)" opacity="0.85"/></g></svg>
<svg class="a" style="left:127px;top:166.00px" width="12.40" height="3.90"><g transform="scale(0.905,0.944) translate(-4.2,0)"><rect x="4.2" width="12.60" height="3.6" fill="url(#p1)" opacity="0.85"/></g></svg>
<div class="a" style="left:117.5px;top:170.8px;width:1.4px;height:0.8px;background:#333"></div>
<div class="a" style="left:131.5px;top:170.8px;width:1.4px;height:0.8px;background:#333"></div>
<svg class="a" style="left:135px;top:178.40px" width="8.60" height="3.70"><g transform="scale(0.905,0.889) translate(-4.2,0)"><rect x="4.2" width="8.40" height="3.6" fill="url(#p1)" opacity="0.54"/></g></svg>
<svg class="a" style="left:192px;top:152px" width="100" height="20" viewBox="0 0 100 20"><rect x="1.5" y="1" width="3.5" height="4.5" fill="#fff" stroke="#888" stroke-width=".5"/><rect x="3" y="3" width="2.5" height="2.5" fill="#9ab"/><ellipse cx="38.5" cy="5" rx="3.6" ry="3" fill="#fafafa" stroke="#aaa" stroke-width=".5"/><path d="M36.5 7.5l1 1.2 2-2.5" stroke="#d03030" stroke-width=".7" fill="none"/><rect x="47.5" y="1.5" width="4" height="4" fill="#e8f0fa" stroke="#4a78b0" stroke-width=".6"/><rect x="75.5" y="1" width="4.5" height="4.5" fill="#e8f2fc" stroke="#3a7ad0" stroke-width=".6"/><path d="M77.75 1v4.5M75.5 3.25h4.5" stroke="#3a7ad0" stroke-width=".4"/></svg>
<svg class="a" style="left:198px;top:153.60px" width="17.80" height="3.70"><g transform="scale(1.000,0.889) translate(-12.6,0)"><rect x="12.6" width="16.80" height="3.6" fill="url(#p1)" opacity="0.85"/></g></svg>
<svg class="a" style="left:216px;top:154px" width="3" height="3"><path d="M.3.8h2l-1 1.2z" fill="#333"/></svg>
<svg class="a" style="left:245px;top:153.60px" width="9.00" height="3.70"><g transform="scale(0.952,0.889) translate(-0.0,0)"><rect x="0.0" width="8.40" height="3.6" fill="url(#p1)" opacity="0.85"/></g></svg>
<svg class="a" style="left:255px;top:154px" width="3" height="3"><path d="M.3.8h2l-1 1.2z" fill="#333"/></svg>
<svg class="a" style="left:273px;top:153.60px" width="9.40" height="3.70"><g transform="scale(1.000,0.889) translate(-0.0,0)"><rect x="0.0" width="8.40" height="3.6" fill="url(#p1)" opacity="0.85"/></g></svg>
<svg class="a" style="left:277px;top:160.90px" width="13.60" height="3.70"><g transform="scale(1.000,0.889) translate(-12.6,0)"><rect x="12.6" width="12.60" height="3.6" fill="url(#p1)" opacity="0.85"/></g></svg>
<svg class="a" style="left:277px;top:167.90px" width="17.80" height="3.70"><g transform="scale(1.000,0.889) translate(-8.4,0)"><rect x="8.4" width="16.80" height="3.6" fill="url(#p1)" opacity="0.85"/></g></svg>
<svg class="a" style="left:277px;top:178.40px" width="7.00" height="3.70"><g transform="scale(0.714,0.889) translate(-12.6,0)"><rect x="12.6" width="8.40" height="3.6" fill="url(#p1)" opacity="0.54"/></g></svg>
<div class="a" style="left:291.5px;top:152px;width:0.6px;height:31px;background:#e2e3e5"></div>
<svg class="a" style="left:396px;top:142px" width="15" height="9" viewBox="0 0 15 9"><path d="M2 5.5l1.5-1.5 1.5 1.5" stroke="#777" stroke-width=".5" fill="none"/><circle cx="10.8" cy="4.5" r="3.2" fill="#1c5ba6"/><path d="M9.8 3.6a1 1 0 1 1 1.4.9v.7" stroke="#fff" stroke-width=".7" fill="none"/><circle cx="11.1" cy="6.3" r=".35" fill="#fff"/></svg>
<svg class="a" style="left:35px;top:185px" width="80" height="11" viewBox="0 0 80 11"><path d="M3 5.5h5M3 5.5l2-2M3 5.5l2 2" stroke="#666" stroke-width=".6" fill="none"/><path d="M13 5.5h5M18 5.5l-2-2M18 5.5l-2 2" stroke="#dcdcdc" stroke-width=".6" fill="none"/><path d="M22 5l1 1 1-1" stroke="#888" stroke-width=".5" fill="none"/><path d="M30 8V3.5M28.3 5.2L30 3.5l1.7 1.7" stroke="#666" stroke-width=".6" fill="none"/><path d="M38.5 2v5M36.5 5l2 2.5 2-2.5" stroke="#2a6cc0" stroke-width="1.2" fill="none"/><path d="M43 4.7l.8.8-.8.8" stroke="#555" stroke-width=".5" fill="none"/><path d="M59.5 4.7l.8.8-.8.8" stroke="#555" stroke-width=".5" fill="none"/></svg>
<div class="a" style="left:68.5px;top:185.3px;width:213px;height:10.5px;border:0.5px solid #ececec;border-right:none"></div>
<svg class="a" style="left:82.7px;top:188.80px" width="8.60" height="3.90"><g transform="scale(0.905,0.944) translate(-12.6,0)"><rect x="12.6" width="8.40" height="3.6" fill="url(#p1)" opacity="0.85"/></g></svg>
<svg class="a" style="left:98.7px;top:188.80px" width="8.60" height="3.90"><g transform="scale(0.905,0.944) translate(-12.6,0)"><rect x="12.6" width="8.40" height="3.6" fill="url(#p1)" opacity="0.85"/></g></svg>
<svg class="a" style="left:279px;top:187px" width="8" height="8" viewBox="0 0 8 8"><path d="M5.6 2.6A2.2 2.2 0 1 0 6 4.5" stroke="#555" stroke-width=".6" fill="none"/><path d="M4.8 1.6l1 1.2-1.4.3" stroke="#555" stroke-width=".5" fill="none"/></svg>
<div class="a" style="left:291.3px;top:185.3px;width:115px;height:10.5px;border:0.5px solid #ececec"></div>
<svg class="a" style="left:295px;top:187px" width="7" height="7" viewBox="0 0 7 7"><circle cx="4" cy="3" r="1.5" stroke="#777" stroke-width=".5" fill="none"/><path d="M3 4l-1.6 1.6" stroke="#777" stroke-width=".6"/></svg>
<svg class="a" style="left:305.5px;top:188.80px" width="9.40" height="3.90"><g transform="scale(1.000,0.944) translate(-12.6,0)"><rect x="12.6" width="8.40" height="3.6" fill="url(#p1)" opacity="0.62"/></g></svg>
<svg class="a" style="left:314.5px;top:188.80px" width="9.00" height="3.90"><g transform="scale(0.952,0.944) translate(-8.4,0)"><rect x="8.4" width="8.40" height="3.6" fill="url(#p1)" opacity="0.62"/></g></svg>
<div class="a" style="left:35px;top:219.3px;width:51px;height:7.1px;background:#d9d9d9"></div>
<svg class="a" style="left:40px;top:200px" width="12" height="100" viewBox="0 0 12 100"><path d="M4.3 5.3l.6 1.3 1.4.1-1.1.9.4 1.4-1.3-.8-1.3.8.4-1.4-1.1-.9 1.4-.1z" fill="#2a78d0"/><rect x="4" y="12.6" width="6" height="4" fill="#3a8ee0"/><rect x="4" y="16.3" width="6" height=".8" fill="#1a5aa8"/><path d="M7 19.5v4.5M5 22l2 2.5 2-2.5" stroke="#2a7ad0" stroke-width="1.2" fill="none"/><rect x="5" y="28.8" width="4" height="4.8" fill="#dceaf6" stroke="#8ab0d0" stroke-width=".5"/><rect x="4.5" y="36.7" width="5" height="4" fill="#7090b0" stroke="#456" stroke-width=".4"/><rect x="5" y="45" width="3.8" height="4.6" fill="#f6d670"/><path d="M6.5 53v4M6.5 57a1 .8 0 1 1-1-.6" stroke="#2a78d0" stroke-width=".8" fill="none"/><rect x="5" y="61.2" width="3.8" height="5" fill="#556070"/><path d="M2 76.2a1.5 1.5 0 0 1 1.8-1.8a2 2 0 0 1 3.6 .6a1.2 1.2 0 0 1 0 2.4h-5.4z" fill="#1a68c0" transform="translate(0,-1)"/><rect x="1.5" y="82.5" width="5.5" height="3.5" fill="#3aa0e8"/><rect x="1.5" y="86.5" width="5.5" height=".8" fill="#3a88d0"/><circle cx="4.3" cy="95.6" r="2.5" fill="#2a8ad8"/><circle cx="5.5" cy="94.4" r="1.2" fill="#9ad0f0"/></svg>
<svg class="a" style="left:48.6px;top:205.40px" width="16.60" height="3.90"><g transform="scale(0.929,0.944) translate(-0.0,0)"><rect x="0.0" width="16.80" height="3.6" fill="url(#p1)" opacity="0.70"/></g></svg>
<svg class="a" style="left:51.4px;top:213.20px" width="8.80" height="3.90"><g transform="scale(0.929,0.944) translate(-4.2,0)"><rect x="4.2" width="8.40" height="3.6" fill="url(#p1)" opacity="0.90"/></g></svg>
<svg class="a" style="left:51.4px;top:221.00px" width="8.80" height="3.90"><g transform="scale(0.929,0.944) translate(-8.4,0)"><rect x="8.4" width="8.40" height="3.6" fill="url(#p1)" opacity="0.90"/></g></svg>
<svg class="a" style="left:51.4px;top:229.40px" width="8.80" height="3.90"><g transform="scale(0.929,0.944) translate(-0.0,0)"><rect x="0.0" width="8.40" height="3.6" fill="url(#p1)" opacity="0.90"/></g></svg>
<svg class="a" style="left:51.4px;top:237.20px" width="8.80" height="3.90"><g transform="scale(0.929,0.944) translate(-4.2,0)"><rect x="4.2" width="8.40" height="3.6" fill="url(#p1)" opacity="0.90"/></g></svg>
<svg class="a" style="left:51.4px;top:253.40px" width="8.80" height="3.90"><g transform="scale(0.929,0.944) translate(-0.0,0)"><rect x="0.0" width="8.40" height="3.6" fill="url(#p1)" opacity="0.90"/></g></svg>
<svg class="a" style="left:51.4px;top:261.90px" width="8.80" height="3.90"><g transform="scale(0.929,0.944) translate(-8.4,0)"><rect x="8.4" width="8.40" height="3.6" fill="url(#p1)" opacity="0.90"/></g></svg>
<svg class="a" style="left:49.5px;top:283.00px" width="8.80" height="3.90"><g transform="scale(0.929,0.944) translate(-12.6,0)"><rect x="12.6" width="8.40" height="3.6" fill="url(#p1)" opacity="0.90"/></g></svg>
<svg class="a" style="left:49.5px;top:293.90px" width="8.80" height="3.90"><g transform="scale(0.929,0.944) translate(-4.2,0)"><rect x="4.2" width="8.40" height="3.6" fill="url(#p1)" opacity="0.90"/></g></svg>
<div class="t" style="left:51.4px;top:244.64px;font-size:4.6px;line-height:5.52px;color:#222;letter-spacing:-.12px">OWUtemp</div>
<div class="t" style="left:49px;top:271.64px;font-size:4.6px;line-height:5.52px;color:#222;letter-spacing:-.12px">OneDrive</div>
<svg class="a" style="left:82px;top:212.9px" width="4" height="4" viewBox="0 0 4 4"><path d="M.6 3.4l1.4-1.4M1.5 1.2l1.3 1.3M2 .7l1.3 1.3" stroke="#666" stroke-width=".6"/></svg>
<svg class="a" style="left:82px;top:220.7px" width="4" height="4" viewBox="0 0 4 4"><path d="M.6 3.4l1.4-1.4M1.5 1.2l1.3 1.3M2 .7l1.3 1.3" stroke="#666" stroke-width=".6"/></svg>
<svg class="a" style="left:82px;top:229.1px" width="4" height="4" viewBox="0 0 4 4"><path d="M.6 3.4l1.4-1.4M1.5 1.2l1.3 1.3M2 .7l1.3 1.3" stroke="#666" stroke-width=".6"/></svg>
<svg class="a" style="left:82px;top:236.9px" width="4" height="4" viewBox="0 0 4 4"><path d="M.6 3.4l1.4-1.4M1.5 1.2l1.3 1.3M2 .7l1.3 1.3" stroke="#666" stroke-width=".6"/></svg>
<div class="a" style="left:90.8px;top:199.8px;width:3.8px;height:4px;border:0.6px solid #aaa"></div>
<svg class="a" style="left:99.2px;top:200.40px" width="8.60" height="3.70"><g transform="scale(0.905,0.889) translate(-0.0,0)"><rect x="0.0" width="8.40" height="3.6" fill="url(#p1)" opacity="0.54"/></g></svg>
<div class="a" style="left:92.7px;top:243.8px;width:260px;height:6.8px;background:#d9d9d9"></div>
<div class="a" style="left:92.8px;top:245.1px;width:3.6px;height:3.8px;border:0.6px solid #777;background:#fff"></div>
<svg class="a" style="left:93px;top:245.3px" width="4" height="4" viewBox="0 0 4 4"><path d="M.8 2l.9.9 1.5-1.9" stroke="#333" stroke-width=".5" fill="none"/></svg>
<svg class="a" style="left:98px;top:208px" width="6" height="50" viewBox="0 0 6 50"><path d="M.8 1h3l1.2 1.2V6H.8z" fill="#f0f0f0" stroke="#9aa" stroke-width=".5"/><rect x=".4" y="8" width="5" height="5" fill="#3a2a30"/><rect x=".9" y="8.5" width="4" height="1.3" fill="#c83030"/><rect x=".9" y="9.9" width="4" height="1.3" fill="#309040"/><rect x=".9" y="11.3" width="4" height="1.2" fill="#5a3aa0"/><rect x="2.4" y="8" width="1" height="5" fill="#d8b070" opacity=".8"/><rect x=".4" y="15" width="5" height="5" fill="#3a2a30"/><rect x=".9" y="15.5" width="4" height="1.3" fill="#c83030"/><rect x=".9" y="16.9" width="4" height="1.3" fill="#309040"/><rect x=".9" y="18.3" width="4" height="1.2" fill="#5a3aa0"/><rect x="2.4" y="15" width="1" height="5" fill="#d8b070" opacity=".8"/><rect x=".4" y="29" width="5" height="5" fill="#3a2a30"/><rect x=".9" y="29.5" width="4" height="1.3" fill="#c83030"/><rect x=".9" y="30.9" width="4" height="1.3" fill="#309040"/><rect x=".9" y="32.3" width="4" height="1.2" fill="#5a3aa0"/><rect x="2.4" y="29" width="1" height="5" fill="#d8b070" opacity=".8"/><rect x=".8" y="22.5" width="4" height="5" fill="#d0e8f8" stroke="#6aa0d8" stroke-width=".4"/><rect x=".5" y="36.3" width="4.8" height="4.6" fill="#3a2a8a"/><circle cx="2.9" cy="38.6" r="1.4" fill="#a890f0"/><rect x=".8" y="43.5" width="4.2" height="4.8" fill="#f6d670"/></svg>
<div class="t" style="left:104.9px;top:209.14px;font-size:4.6px;line-height:5.52px;color:#222;letter-spacing:-.1px">cpuz.ini</div>
<div class="t" style="left:104.9px;top:216.24px;font-size:4.6px;line-height:5.52px;color:#222;letter-spacing:-.1px">winrar-x64-624b1tc</div>
<div class="t" style="left:104.9px;top:223.24px;font-size:4.6px;line-height:5.52px;color:#222;letter-spacing:-.1px">Speccy 1.32.774.rar</div>
<div class="t" style="left:104.9px;top:230.24px;font-size:4.6px;line-height:5.52px;color:#222;letter-spacing:-.1px">ChromeSetup.exe</div>
<div class="t" style="left:104.9px;top:237.24px;font-size:4.6px;line-height:5.52px;color:#222;letter-spacing:-.1px">cpu-z_2.08-cn.zip</div>
<div class="t" style="left:104.9px;top:244.24px;font-size:4.6px;line-height:5.52px;color:#222;letter-spacing:-.1px">cpuz_x64.exe</div>
<div class="t" style="left:104.9px;top:251.24px;font-size:4.6px;line-height:5.52px;color:#222;letter-spacing:-.1px">Speccy 1.32.774 - </div>
<div class="t" style="left:278.3px;top:209.14px;font-size:4.6px;line-height:5.52px;color:#666;transform:scaleX(0.913);transform-origin:0 50%;">5</div>
<div class="t" style="left:278.3px;top:216.24px;font-size:4.6px;line-height:5.52px;color:#666;transform:scaleX(0.913);transform-origin:0 50%;">2</div>
<div class="t" style="left:278.3px;top:223.24px;font-size:4.6px;line-height:5.52px;color:#666;transform:scaleX(0.913);transform-origin:0 50%;">7</div>
<div class="t" style="left:278.3px;top:230.24px;font-size:4.6px;line-height:5.52px;color:#666;transform:scaleX(0.913);transform-origin:0 50%;">3</div>
<div class="t" style="left:278.3px;top:237.24px;font-size:4.6px;line-height:5.52px;color:#666;transform:scaleX(0.913);transform-origin:0 50%;">8</div>
<div class="t" style="left:278.3px;top:244.24px;font-size:4.6px;line-height:5.52px;color:#666;transform:scaleX(0.913);transform-origin:0 50%;">6</div>
<div class="t" style="left:278.3px;top:251.24px;font-size:4.6px;line-height:5.52px;color:#666;transform:scaleX(0.913);transform-origin:0 50%;">4</div>
<svg class="a" style="left:289px;top:200.40px" width="9.00" height="3.70"><g transform="scale(0.952,0.889) translate(-4.2,0)"><rect x="4.2" width="8.40" height="3.6" fill="url(#p1)" opacity="0.54"/></g></svg>
<div class="a" style="left:326.6px;top:199px;width:0.6px;height:7px;background:#e5e5e5"></div>
<svg class="a" style="left:331px;top:200.40px" width="8.20" height="3.70"><g transform="scale(0.857,0.889) translate(-12.6,0)"><rect x="12.6" width="8.40" height="3.6" fill="url(#p1)" opacity="0.54"/></g></svg>
<div class="a" style="left:352.6px;top:199px;width:0.6px;height:7px;background:#e5e5e5"></div>
<svg class="a" style="left:289px;top:210.20px" width="17.00" height="3.90"><g transform="scale(0.952,0.944) translate(-4.2,0)"><rect x="4.2" width="16.80" height="3.6" fill="url(#p1)" opacity="0.56"/></g></svg>
<div class="t" style="left:331px;top:209.14px;font-size:4.6px;line-height:5.52px;color:#666;transform:scaleX(0.913);transform-origin:100% 50%;width:20.6px;text-align:right">1 KB</div>
<svg class="a" style="left:289px;top:217.30px" width="17.00" height="3.90"><g transform="scale(0.952,0.944) translate(-8.4,0)"><rect x="8.4" width="16.80" height="3.6" fill="url(#p1)" opacity="0.56"/></g></svg>
<div class="t" style="left:331px;top:216.24px;font-size:4.6px;line-height:5.52px;color:#666;transform:scaleX(0.913);transform-origin:100% 50%;width:20.6px;text-align:right">3,793 KB</div>
<div class="t" style="left:288.5px;top:223.24px;font-size:4.6px;line-height:5.52px;color:#666;transform:scaleX(0.913);transform-origin:0 50%;">WinRAR</div>
<svg class="a" style="left:306.8px;top:224.30px" width="13.00" height="3.90"><g transform="scale(0.952,0.944) translate(-4.2,0)"><rect x="4.2" width="12.60" height="3.6" fill="url(#p1)" opacity="0.56"/></g></svg>
<div class="t" style="left:331px;top:223.24px;font-size:4.6px;line-height:5.52px;color:#666;transform:scaleX(0.913);transform-origin:100% 50%;width:20.6px;text-align:right">3,651 KB</div>
<svg class="a" style="left:289px;top:231.30px" width="17.00" height="3.90"><g transform="scale(0.952,0.944) translate(-0.0,0)"><rect x="0.0" width="16.80" height="3.6" fill="url(#p1)" opacity="0.56"/></g></svg>
<div class="t" style="left:331px;top:230.24px;font-size:4.6px;line-height:5.52px;color:#666;transform:scaleX(0.913);transform-origin:100% 50%;width:20.6px;text-align:right">1,342 KB</div>
<div class="t" style="left:288.5px;top:237.24px;font-size:4.6px;line-height:5.52px;color:#666;transform:scaleX(0.913);transform-origin:0 50%;">WinRAR ZIP</div>
<svg class="a" style="left:314.8px;top:238.30px" width="13.00" height="3.90"><g transform="scale(0.952,0.944) translate(-12.6,0)"><rect x="12.6" width="12.60" height="3.6" fill="url(#p1)" opacity="0.56"/></g></svg>
<div class="t" style="left:331px;top:237.24px;font-size:4.6px;line-height:5.52px;color:#666;transform:scaleX(0.913);transform-origin:100% 50%;width:20.6px;text-align:right">3,478 KB</div>
<svg class="a" style="left:289px;top:245.30px" width="17.00" height="3.90"><g transform="scale(0.952,0.944) translate(-8.4,0)"><rect x="8.4" width="16.80" height="3.6" fill="url(#p1)" opacity="0.56"/></g></svg>
<div class="t" style="left:331px;top:244.24px;font-size:4.6px;line-height:5.52px;color:#666;transform:scaleX(0.913);transform-origin:100% 50%;width:20.6px;text-align:right">4,379 KB</div>
<svg class="a" style="left:289px;top:252.30px" width="21.00" height="3.90"><g transform="scale(0.952,0.944) translate(-4.2,0)"><rect x="4.2" width="21.00" height="3.6" fill="url(#p1)" opacity="0.56"/></g></svg>
<div class="t" style="left:38px;top:338.44px;font-size:4.6px;line-height:5.52px;color:#444;transform:scaleX(0.913);transform-origin:0 50%;">7</div>
<svg class="a" style="left:41.5px;top:339.60px" width="12.40" height="3.70"><g transform="scale(0.905,0.889) translate(-8.4,0)"><rect x="8.4" width="12.60" height="3.6" fill="url(#p1)" opacity="0.62"/></g></svg>
<svg class="a" style="left:61px;top:339.60px" width="12.40" height="3.70"><g transform="scale(0.905,0.889) translate(-8.4,0)"><rect x="8.4" width="12.60" height="3.6" fill="url(#p1)" opacity="0.62"/></g></svg>
<div class="t" style="left:73px;top:338.44px;font-size:4.6px;line-height:5.52px;color:#444;transform:scaleX(0.913);transform-origin:0 50%;">1</div>
<svg class="a" style="left:76.8px;top:339.60px" width="12.40" height="3.70"><g transform="scale(0.905,0.889) translate(-4.2,0)"><rect x="4.2" width="12.60" height="3.6" fill="url(#p1)" opacity="0.62"/></g></svg>
<div class="t" style="left:91.5px;top:338.44px;font-size:4.6px;line-height:5.52px;color:#444;transform:scaleX(0.913);transform-origin:0 50%;">4.47 MB</div>
<div class="a" style="left:394.2px;top:337px;width:7.5px;height:7.4px;background:#d0e6f8;border:0.5px solid #a8d0f0"></div>
<svg class="a" style="left:395.5px;top:338.5px" width="5" height="5" viewBox="0 0 5 5"><path d="M.5 1h4M.5 2.3h4M.5 3.6h4" stroke="#8a9aaa" stroke-width=".5"/></svg>
<svg class="a" style="left:403.3px;top:338.3px" width="6" height="5" viewBox="0 0 6 5"><rect x=".4" y=".4" width="4.6" height="3.8" fill="#eee" stroke="#444" stroke-width=".5"/><rect x=".8" y="2.2" width="2" height="1.8" fill="#222"/></svg>
</div>
<div class="a" style="left:142.4px;top:160px;width:135.4px;height:135.6px;background:#f0f0f0;box-shadow:0 1.5px 5px rgba(0,0,0,.38)"></div>
<div class="a" style="left:0;top:0;width:640px;height:477px;filter:blur(.3px)">
<div class="a" style="left:142.4px;top:160px;width:135.4px;height:135.6px;background:#f0f0f0;border:0.8px solid #a8a8a8"></div>
<div class="a" style="left:143.2px;top:160.8px;width:133.8px;height:7.6px;background:#fff"></div>
<svg class="a" style="left:144px;top:162px" width="6" height="6" viewBox="0 0 6 6"><rect x="0" y="0" width="5" height="5" fill="#3a2a7a"/><circle cx="2.5" cy="2.5" r="1.5" fill="none" stroke="#b8a8f0" stroke-width=".7"/></svg>
<div class="t" style="left:151.2px;top:161.84px;font-size:4.6px;line-height:5.52px;color:#555;transform:scaleX(0.978);transform-origin:0 50%;">CPU-Z</div>
<div class="a" style="left:237.6px;top:164.4px;width:3.9px;height:0.5px;background:#555"></div>
<div class="a" style="left:253px;top:162.7px;width:3.8px;height:3.8px;border:0.6px solid #ccc"></div>
<svg class="a" style="left:268px;top:162.4px" width="5" height="5" viewBox="0 0 5 5"><path d="M.5.5l3.8 3.8M4.3.5L.5 4.3" stroke="#444" stroke-width=".6"/></svg>
<svg class="a" style="left:146.3px;top:172.10px" width="13.90" height="4.10"><g transform="scale(1.024,1.000) translate(-0.0,0)"><rect x="0.0" width="12.60" height="3.6" fill="url(#p1)" opacity="0.85"/></g></svg>
<svg class="a" style="left:163.8px;top:172.10px" width="9.00" height="4.10"><g transform="scale(0.952,1.000) translate(-12.6,0)"><rect x="12.6" width="8.40" height="3.6" fill="url(#p1)" opacity="0.85"/></g></svg>
<svg class="a" style="left:176.9px;top:172.10px" width="9.00" height="4.10"><g transform="scale(0.952,1.000) translate(-12.6,0)"><rect x="12.6" width="8.40" height="3.6" fill="url(#p1)" opacity="0.85"/></g></svg>
<div class="t" style="left:192.2px;top:171.14px;font-size:4.6px;line-height:5.52px;color:#666;transform:scaleX(0.870);transform-origin:0 50%;">SPD</div>
<svg class="a" style="left:205.9px;top:172.10px" width="9.40" height="4.10"><g transform="scale(1.000,1.000) translate(-8.4,0)"><rect x="8.4" width="8.40" height="3.6" fill="url(#p3)" opacity="1.00"/></g></svg>
<svg class="a" style="left:219px;top:172.10px" width="17.00" height="4.10"><g transform="scale(0.952,1.000) translate(-4.2,0)"><rect x="4.2" width="16.80" height="3.6" fill="url(#p1)" opacity="0.85"/></g></svg>
<svg class="a" style="left:239.8px;top:172.10px" width="9.00" height="4.10"><g transform="scale(0.952,1.000) translate(-12.6,0)"><rect x="12.6" width="8.40" height="3.6" fill="url(#p1)" opacity="0.85"/></g></svg>
<div class="a" style="left:160.5px;top:171.2px;width:0.5px;height:5.6px;background:#777"></div>
<div class="a" style="left:174.2px;top:171.2px;width:0.5px;height:5.6px;background:#777"></div>
<div class="a" style="left:188.8px;top:171.2px;width:0.5px;height:5.6px;background:#777"></div>
<div class="a" style="left:217.3px;top:171.2px;width:0.5px;height:5.6px;background:#777"></div>
<div class="a" style="left:237.5px;top:171.2px;width:0.5px;height:5.6px;background:#777"></div>
<div class="a" style="left:251.2px;top:171.2px;width:0.5px;height:5.6px;background:#777"></div>
<div class="a" style="left:145.2px;top:180px;width:129.1px;height:12.4px;border:0.6px solid #d8d8d8;box-shadow:inset 0.6px 0.6px 0 #fff, 0.6px 0.6px 0 #fff"></div>
<div class="a" style="left:148.5px;top:178px;width:24.5px;height:4px;background:#f0f0f0"></div>
<svg class="a" style="left:149px;top:178.30px" width="24.40" height="3.90"><g transform="scale(0.929,0.944) translate(-12.6,0)"><rect x="12.6" width="25.20" height="3.6" fill="url(#p1)" opacity="0.78"/></g></svg>
<div class="a" style="left:149px;top:183.7px;width:67px;height:6.6px;background:#f0f0f0;border:0.6px solid #b8b8b8"></div>
<div class="t" style="left:150.5px;top:184.24px;font-size:4.6px;line-height:5.52px;color:#9a9a9a;transform:scaleX(0.783);transform-origin:0 50%;">NVIDIA GeForce GTX 760</div>
<div class="a" style="left:210.8px;top:184.4px;width:4.6px;height:5.3px;border-left:0.6px solid #ccc"></div>
<svg class="a" style="left:211.5px;top:185.8px" width="4" height="3"><path d="M.8.8h2l-1 1.2z" fill="#999"/></svg>
<svg class="a" style="left:220.7px;top:185.30px" width="16.80" height="3.90"><g transform="scale(0.940,0.944) translate(-12.6,0)"><rect x="12.6" width="16.80" height="3.6" fill="url(#p1)" opacity="0.85"/></g></svg>
<div class="a" style="left:239.3px;top:183.7px;width:32.3px;height:6.6px;background:#fff;border:0.6px solid #777;border-right-color:#ddd;border-bottom-color:#ddd"></div>
<svg class="a" style="left:241px;top:185.30px" width="8.60" height="3.90"><g transform="scale(0.905,0.944) translate(-8.4,0)"><rect x="8.4" width="8.40" height="3.6" fill="url(#p4)" opacity="0.93"/></g></svg>
<div class="a" style="left:265.4px;top:184.4px;width:5.8px;height:5.3px;background:#fff"></div>
<svg class="a" style="left:266.5px;top:185.8px" width="4" height="3"><path d="M.5.6h2.6l-1.3 1.5z" fill="#111"/></svg>
<div class="a" style="left:145.2px;top:196.6px;width:129.1px;height:31px;border:0.6px solid #d8d8d8;box-shadow:inset 0.6px 0.6px 0 #fff, 0.6px 0.6px 0 #fff"></div>
<div class="a" style="left:148.5px;top:194.5px;width:21px;height:4px;background:#f0f0f0"></div>
<svg class="a" style="left:149px;top:195.20px" width="20.25" height="3.90"><g transform="scale(0.917,0.944) translate(-8.4,0)"><rect x="8.4" width="21.00" height="3.6" fill="url(#p1)" opacity="0.78"/></g></svg>
<svg class="a" style="left:161px;top:201.30px" width="8.40" height="3.90"><g transform="scale(0.881,0.944) translate(-8.4,0)"><rect x="8.4" width="8.40" height="3.6" fill="url(#p1)" opacity="0.85"/></g></svg>
<svg class="a" style="left:152.3px;top:207.40px" width="16.92" height="3.90"><g transform="scale(0.948,0.944) translate(-0.0,0)"><rect x="0.0" width="16.80" height="3.6" fill="url(#p1)" opacity="0.85"/></g></svg>
<svg class="a" style="left:161px;top:213.50px" width="8.40" height="3.90"><g transform="scale(0.881,0.944) translate(-0.0,0)"><rect x="0.0" width="8.40" height="3.6" fill="url(#p1)" opacity="0.85"/></g></svg>
<svg class="a" style="left:161px;top:219.60px" width="8.40" height="3.90"><g transform="scale(0.881,0.944) translate(-12.6,0)"><rect x="12.6" width="8.40" height="3.6" fill="url(#p1)" opacity="0.85"/></g></svg>
<div class="a" style="left:170.9px;top:200.3px;width:75px;height:5.4px;background:#f6f6f6;border:0.6px solid #dcdcdc;border-top-color:#e8e8e8"></div>
<div class="a" style="left:170.9px;top:206.4px;width:75px;height:5.4px;background:#f6f6f6;border:0.6px solid #dcdcdc;border-top-color:#e8e8e8"></div>
<div class="a" style="left:170.9px;top:212.5px;width:39px;height:5.4px;background:#f6f6f6;border:0.6px solid #dcdcdc;border-top-color:#e8e8e8"></div>
<div class="a" style="left:170.9px;top:218.60000000000002px;width:39px;height:5.4px;background:#f6f6f6;border:0.6px solid #dcdcdc;border-top-color:#e8e8e8"></div>
<div class="a" style="left:224.5px;top:212.5px;width:21.3px;height:5.4px;background:#f6f6f6;border:0.6px solid #dcdcdc;border-top-color:#e8e8e8"></div>
<div class="a" style="left:224.5px;top:218.60000000000002px;width:21.3px;height:5.4px;background:#f6f6f6;border:0.6px solid #dcdcdc;border-top-color:#e8e8e8"></div>
<div class="t" style="left:187.9px;top:200.24px;font-size:4.6px;line-height:5.52px;color:#4646c0;transform:scaleX(0.804);transform-origin:0 50%;">NVIDIA GeForce GTX 760</div>
<div class="t" style="left:176.4px;top:206.34px;font-size:4.6px;line-height:5.52px;color:#4646c0;transform:scaleX(0.804);transform-origin:0 50%;">Micro-Star International Co., Ltd. (MSI)</div>
<div class="t" style="left:181.3px;top:212.44px;font-size:4.6px;line-height:5.52px;color:#4646c0;transform:scaleX(0.804);transform-origin:0 50%;">GK104</div>
<div class="t" style="left:179.7px;top:218.54px;font-size:4.6px;line-height:5.52px;color:#4646c0;transform:scaleX(0.804);transform-origin:0 50%;">28</div>
<svg class="a" style="left:184.5px;top:219.60px" width="9.00" height="3.90"><g transform="scale(0.952,0.944) translate(-0.0,0)"><rect x="0.0" width="8.40" height="3.6" fill="url(#p5)" opacity="0.93"/></g></svg>
<svg class="a" style="left:213px;top:213.50px" width="8.20" height="3.90"><g transform="scale(0.857,0.944) translate(-0.0,0)"><rect x="0.0" width="8.40" height="3.6" fill="url(#p1)" opacity="0.85"/></g></svg>
<div class="t" style="left:214.7px;top:218.54px;font-size:4.6px;line-height:5.52px;color:#333;transform:scaleX(0.804);transform-origin:0 50%;">TDP</div>
<div class="t" style="left:232.7px;top:212.44px;font-size:4.6px;line-height:5.52px;color:#4646c0;transform:scaleX(0.804);transform-origin:0 50%;">A2</div>
<div class="t" style="left:228.3px;top:218.54px;font-size:4.6px;line-height:5.52px;color:#4646c0;transform:scaleX(0.804);transform-origin:0 50%;">195.0 W</div>
<svg class="a" style="left:248px;top:200px" width="25" height="23" viewBox="0 0 25 23"><rect x="0" y="0" width="24.6" height="22.7" rx=".6" fill="#121212"/><text x="2.2" y="3.9" font-family="Liberation Sans" font-size="2.2" fill="#bbb" font-weight="bold">nVIDIA</text><text x="2.0" y="7.6" font-family="Liberation Sans" font-size="3.6" fill="#e8e8e8" font-weight="bold" textLength="19.8" lengthAdjust="spacingAndGlyphs">GEFORCE</text><text x="2.0" y="11.6" font-family="Liberation Sans" font-size="3.6" fill="#e8e8e8" font-weight="bold" textLength="8.6" lengthAdjust="spacingAndGlyphs">GTX</text><path d="M11 22.7C13 18 17 14.5 24.6 13.5v2.2c-5 .8-8.5 3.5-10.5 7z" fill="#76b900"/><path d="M15.5 22.7c1.6-3 4.5-5 9.1-5.6v2c-3 .5-5.2 1.8-6.6 3.6z" fill="#8ccc10"/><path d="M20 22.7c1-1.4 2.6-2.2 4.6-2.4v2.4z" fill="#6aa800"/><rect x="0" y="21.9" width="24.6" height=".8" fill="#5a8a20" opacity=".6"/></svg>
<div class="a" style="left:145.7px;top:232.6px;width:59.7px;height:23px;border:0.6px solid #d8d8d8;box-shadow:inset 0.6px 0.6px 0 #fff, 0.6px 0.6px 0 #fff"></div>
<div class="a" style="left:148px;top:230.5px;width:10px;height:4px;background:#f0f0f0"></div>
<svg class="a" style="left:148.5px;top:230.90px" width="9.20" height="3.90"><g transform="scale(0.976,0.944) translate(-12.6,0)"><rect x="12.6" width="8.40" height="3.6" fill="url(#p1)" opacity="0.85"/></g></svg>
<svg class="a" style="left:160.5px;top:236.90px" width="9.00" height="3.90"><g transform="scale(0.952,0.944) translate(-4.2,0)"><rect x="4.2" width="8.40" height="3.6" fill="url(#p1)" opacity="0.85"/></g></svg>
<svg class="a" style="left:152.3px;top:242.90px" width="16.92" height="3.90"><g transform="scale(0.948,0.944) translate(-4.2,0)"><rect x="4.2" width="16.80" height="3.6" fill="url(#p1)" opacity="0.39"/></g></svg>
<svg class="a" style="left:160.5px;top:248.90px" width="9.00" height="3.90"><g transform="scale(0.952,0.944) translate(-4.2,0)"><rect x="4.2" width="8.40" height="3.6" fill="url(#p1)" opacity="0.85"/></g></svg>
<div class="a" style="left:170.9px;top:235.9px;width:31.1px;height:5.4px;background:#f6f6f6;border:0.6px solid #dcdcdc;border-top-color:#e8e8e8"></div>
<div class="a" style="left:170.9px;top:241.9px;width:31.1px;height:5.4px;background:#f6f6f6;border:0.6px solid #dcdcdc;border-top-color:#e8e8e8"></div>
<div class="a" style="left:170.9px;top:247.9px;width:31.1px;height:5.4px;background:#f6f6f6;border:0.6px solid #dcdcdc;border-top-color:#e8e8e8"></div>
<div class="t" style="left:178px;top:235.84px;font-size:4.6px;line-height:5.52px;color:#4646c0;transform:scaleX(0.804);transform-origin:0 50%;">1110.5 MHz</div>
<div class="t" style="left:177.5px;top:247.84px;font-size:4.6px;line-height:5.52px;color:#4646c0;transform:scaleX(0.804);transform-origin:0 50%;">3004.7 MHz</div>
<div class="a" style="left:208.1px;top:233px;width:66.2px;height:29.1px;border:0.6px solid #d8d8d8;box-shadow:inset 0.6px 0.6px 0 #fff, 0.6px 0.6px 0 #fff"></div>
<div class="a" style="left:209px;top:231px;width:9.5px;height:4px;background:#f0f0f0"></div>
<svg class="a" style="left:209.7px;top:231.40px" width="8.80" height="3.90"><g transform="scale(0.929,0.944) translate(-8.4,0)"><rect x="8.4" width="8.40" height="3.6" fill="url(#p1)" opacity="0.85"/></g></svg>
<svg class="a" style="left:222.3px;top:237.20px" width="9.20" height="3.90"><g transform="scale(0.976,0.944) translate(-4.2,0)"><rect x="4.2" width="8.40" height="3.6" fill="url(#p1)" opacity="0.85"/></g></svg>
<svg class="a" style="left:222.3px;top:242.90px" width="9.20" height="3.90"><g transform="scale(0.976,0.944) translate(-12.6,0)"><rect x="12.6" width="8.40" height="3.6" fill="url(#p1)" opacity="0.85"/></g></svg>
<svg class="a" style="left:218.5px;top:248.90px" width="13.00" height="3.90"><g transform="scale(0.952,0.944) translate(-12.6,0)"><rect x="12.6" width="12.60" height="3.6" fill="url(#p1)" opacity="0.85"/></g></svg>
<svg class="a" style="left:222.3px;top:254.90px" width="9.20" height="3.90"><g transform="scale(0.976,0.944) translate(-12.6,0)"><rect x="12.6" width="8.40" height="3.6" fill="url(#p1)" opacity="0.85"/></g></svg>
<div class="a" style="left:233.8px;top:236.20000000000002px;width:37.8px;height:5.4px;background:#f6f6f6;border:0.6px solid #dcdcdc;border-top-color:#e8e8e8"></div>
<div class="a" style="left:233.8px;top:241.9px;width:37.8px;height:5.4px;background:#f6f6f6;border:0.6px solid #dcdcdc;border-top-color:#e8e8e8"></div>
<div class="a" style="left:233.8px;top:247.9px;width:37.8px;height:5.4px;background:#f6f6f6;border:0.6px solid #dcdcdc;border-top-color:#e8e8e8"></div>
<div class="a" style="left:233.8px;top:253.90000000000003px;width:37.8px;height:5.4px;background:#f6f6f6;border:0.6px solid #dcdcdc;border-top-color:#e8e8e8"></div>
<div class="t" style="left:244.7px;top:236.14px;font-size:4.6px;line-height:5.52px;color:#4646c0;transform:scaleX(0.804);transform-origin:0 50%;">2 GBytes</div>
<div class="t" style="left:246px;top:241.84px;font-size:4.6px;line-height:5.52px;color:#4646c0;transform:scaleX(0.804);transform-origin:0 50%;">GDDR5</div>
<div class="t" style="left:247px;top:247.84px;font-size:4.6px;line-height:5.52px;color:#4646c0;transform:scaleX(0.804);transform-origin:0 50%;">Elpida</div>
<div class="t" style="left:247px;top:253.84px;font-size:4.6px;line-height:5.52px;color:#4646c0;transform:scaleX(0.804);transform-origin:0 50%;">256</div>
<svg class="a" style="left:254px;top:254.90px" width="5.00" height="3.90"><g transform="scale(0.952,0.944) translate(-4.2,0)"><rect x="4.2" width="4.20" height="3.6" fill="url(#p5)" opacity="0.93"/></g></svg>
<div class="a" style="left:144px;top:284.8px;width:132.4px;height:0.6px;background:#d0d0d0"></div>
<div class="a" style="left:144px;top:285.4px;width:132.4px;height:0.6px;background:#fff"></div>
<div class="t" style="left:145.9px;top:286.92px;font-size:6.3px;line-height:7.56px;color:#989898;font-style:italic;letter-spacing:.25px;-webkit-text-stroke:.15px #989898">CPU-Z</div>
<div class="t" style="left:169.8px;top:288.54px;font-size:4.6px;line-height:5.52px;color:#222;transform:scaleX(0.848);transform-origin:0 50%;">Ver. 2.08.0.x64</div>
<div class="a" style="left:199.5px;top:287.4px;width:25px;height:7.2px;background:#eaeaea;border:0.6px solid #c8c8c8"></div>
<div class="a" style="left:219.3px;top:287.9px;width:0.6px;height:6.2px;background:#c8c8c8"></div>
<svg class="a" style="left:205.9px;top:289.30px" width="8.40" height="3.90"><g transform="scale(0.881,0.944) translate(-0.0,0)"><rect x="0.0" width="8.40" height="3.6" fill="url(#p1)" opacity="0.93"/></g></svg>
<svg class="a" style="left:220.5px;top:289.8px" width="3" height="3"><path d="M.2.6h2.2l-1.1 1.3z" fill="#111"/></svg>
<div class="a" style="left:225.3px;top:287.4px;width:24.1px;height:7.2px;background:#eaeaea;border:0.6px solid #d0d0d0"></div>
<svg class="a" style="left:233.5px;top:289.30px" width="9.20" height="3.90"><g transform="scale(0.976,0.944) translate(-4.2,0)"><rect x="4.2" width="8.40" height="3.6" fill="url(#p1)" opacity="0.85"/></g></svg>
<div class="a" style="left:250.5px;top:287.4px;width:26px;height:7.4px;background:#eaeaea;border:0.6px solid #666"></div>
<svg class="a" style="left:259.8px;top:289.30px" width="9.20" height="3.90"><g transform="scale(0.976,0.944) translate(-4.2,0)"><rect x="4.2" width="8.40" height="3.6" fill="url(#p1)" opacity="1.00"/></g></svg>
</div>
<div class="a" style="left:0;top:0;width:640px;height:477px;filter:blur(.25px)">
<div class="a" style="left:0px;top:463.5px;width:640px;height:13.5px;background:#07141f"></div>
<svg class="a" style="left:0px;top:465px" width="12" height="11" viewBox="0 0 12 11"><path d="M1.5 3.5l4-2.5 4 2.5z" fill="#4aa8e8"/><rect x="1" y="3.5" width="9" height="6" fill="#5ac0f4"/><path d="M1 3.5l4.5 3.5 4.5-3.5" stroke="#a8e4ff" stroke-width=".7" fill="none"/></svg>
<div class="a" style="left:13.8px;top:463.5px;width:53.8px;height:13.5px;background:#3d474e"></div>
<div class="a" style="left:13.8px;top:476px;width:53.8px;height:1px;background:#9ab4cc"></div>
<svg class="a" style="left:17px;top:466.5px" width="8" height="8" viewBox="0 0 8 8"><rect x=".3" y=".3" width="7" height="7" rx="1.5" fill="#5a2a9a"/><rect x="1.5" y="1.5" width="4.6" height="4.6" rx="1" fill="none" stroke="#d8c0ff" stroke-width=".8"/><circle cx="3.8" cy="3.8" r=".9" fill="#fff"/></svg>
<div class="t" style="left:26px;top:467.54px;font-size:4.6px;line-height:5.52px;color:#e8e8e8;">CPU-Z</div>
<svg class="a" style="left:499.5px;top:466px" width="10" height="10" viewBox="0 0 10 10"><path d="M1 2.5h7l-1 1.5h-5z" fill="#f0a020"/><path d="M1.5 4.5h7l-1 1.5h-5z" fill="#f8c830"/><path d="M2 6.5h6l-1 1.3h-4z" fill="#e85020"/><path d="M3 8.2h4l-1 1.3h-2z" fill="#60c040"/></svg>
<div class="t" style="left:510.6px;top:467.26px;font-size:4.9px;line-height:5.88px;color:#dcdcdc;">CNY/TWD</div>
<div class="t" style="left:535.6px;top:467.26px;font-size:4.9px;line-height:5.88px;color:#3ccf4e;">-0.35%</div>
<svg class="a" style="left:559px;top:467px" width="40" height="8" viewBox="0 0 40 8"><path d="M1.2 4.2l1.8-1.8 1.8 1.8" stroke="#ddd" stroke-width=".6" fill="none"/><circle cx="11" cy="4" r="1.8" fill="none" stroke="#ccc" stroke-width=".7"/><rect x="10.6" y="1" width=".8" height="6" fill="#ccc"/><path d="M17 6.8l5-5v5z" fill="none" stroke="#bbb" stroke-width=".6"/><path d="M24.8 3.2h1l1.5-1.5v4.6l-1.5-1.5h-1z" fill="#ddd"/><path d="M28 2.5a2 2 0 0 1 0 3M29 1.8a3 3 0 0 1 0 4.4" stroke="#ddd" stroke-width=".5" fill="none"/></svg>
<svg class="a" style="left:590.3px;top:467.80px" width="6.60" height="5.50"><g transform="scale(1.333,1.389) translate(-8.4,0)"><rect x="8.4" width="4.20" height="3.6" fill="url(#p6)" opacity="0.93"/></g></svg>
<div class="t" style="left:600px;top:464.14px;font-size:4.6px;line-height:5.52px;color:#ddd;transform:scaleX(0.870);transform-origin:0 50%;"></div>
<svg class="a" style="left:600px;top:465.30px" width="8.20" height="3.70"><g transform="scale(0.857,0.889) translate(-4.2,0)"><rect x="4.2" width="8.40" height="3.6" fill="url(#p7)" opacity="0.93"/></g></svg>
<div class="t" style="left:609px;top:464.14px;font-size:4.6px;line-height:5.52px;color:#e0e0e0;transform:scaleX(0.891);transform-origin:0 50%;">06:28</div>
<div class="t" style="left:600px;top:469.84px;font-size:4.6px;line-height:5.52px;color:#e0e0e0;transform:scaleX(0.935);transform-origin:0 50%;">2023/10/7</div>
<svg class="a" style="left:625px;top:466px" width="8" height="8" viewBox="0 0 8 8"><path d="M.8 1h6v4.5h-3.5l-1.7 1.5v-1.5h-.8z" fill="none" stroke="#ddd" stroke-width=".6"/></svg>
<div class="a" style="left:638.5px;top:463.3px;width:1.5px;height:13.7px;border-left:0.5px solid #556"></div>
</div>
<svg width="0" height="0" style="position:absolute"><defs><pattern id="p0" width="16.8" height="3.6" patternUnits="userSpaceOnUse"><path transform="translate(0.0 0)" d="M.3.5h3M1.8.3v3.2M.5 1.9h2.6M.3 3.3h3.1M.6 2.6l.5.4" stroke="rgb(80,40,110)" stroke-width=".66" fill="none"/><path transform="translate(4.2 0)" d="M.2.5h3.4M1.8.5v3M1 2l.5 1M2.3 1.6l.9.6M.6 3.3h2.6" stroke="rgb(80,40,110)" stroke-width=".66" fill="none"/><path transform="translate(8.4 0)" d="M.2.5h1.4M.9.2v3.2M.2 2h1.4M.3 3.2h1.3M2 .5h1.6M2.1 1.5h1.5M2.1 2.5h1.5M2.8.3v3.2" stroke="rgb(80,40,110)" stroke-width=".66" fill="none"/><path transform="translate(12.6 0)" d="M.5.3v3.2M.2 1.3h1M1.6.6h1.9M2.5.6v2.9M1.5 2.1h2M1.4 3.4h2.2" stroke="rgb(80,40,110)" stroke-width=".66" fill="none"/></pattern><pattern id="p1" width="16.8" height="3.6" patternUnits="userSpaceOnUse"><path transform="translate(0.0 0)" d="M.3.5h3M1.8.3v3.2M.5 1.9h2.6M.3 3.3h3.1M.6 2.6l.5.4" stroke="rgb(0,0,0)" stroke-width=".66" fill="none"/><path transform="translate(4.2 0)" d="M.2.5h3.4M1.8.5v3M1 2l.5 1M2.3 1.6l.9.6M.6 3.3h2.6" stroke="rgb(0,0,0)" stroke-width=".66" fill="none"/><path transform="translate(8.4 0)" d="M.2.5h1.4M.9.2v3.2M.2 2h1.4M.3 3.2h1.3M2 .5h1.6M2.1 1.5h1.5M2.1 2.5h1.5M2.8.3v3.2" stroke="rgb(0,0,0)" stroke-width=".66" fill="none"/><path transform="translate(12.6 0)" d="M.5.3v3.2M.2 1.3h1M1.6.6h1.9M2.5.6v2.9M1.5 2.1h2M1.4 3.4h2.2" stroke="rgb(0,0,0)" stroke-width=".66" fill="none"/></pattern><pattern id="p2" width="16.8" height="3.6" patternUnits="userSpaceOnUse"><path transform="translate(0.0 0)" d="M.3.5h3M1.8.3v3.2M.5 1.9h2.6M.3 3.3h3.1M.6 2.6l.5.4" stroke="rgb(255,255,255)" stroke-width=".66" fill="none"/><path transform="translate(4.2 0)" d="M.2.5h3.4M1.8.5v3M1 2l.5 1M2.3 1.6l.9.6M.6 3.3h2.6" stroke="rgb(255,255,255)" stroke-width=".66" fill="none"/><path transform="translate(8.4 0)" d="M.2.5h1.4M.9.2v3.2M.2 2h1.4M.3 3.2h1.3M2 .5h1.6M2.1 1.5h1.5M2.1 2.5h1.5M2.8.3v3.2" stroke="rgb(255,255,255)" stroke-width=".66" fill="none"/><path transform="translate(12.6 0)" d="M.5.3v3.2M.2 1.3h1M1.6.6h1.9M2.5.6v2.9M1.5 2.1h2M1.4 3.4h2.2" stroke="rgb(255,255,255)" stroke-width=".66" fill="none"/></pattern><pattern id="p3" width="16.8" height="3.6" patternUnits="userSpaceOnUse"><path transform="translate(0.0 0)" d="M.3.5h3M1.8.3v3.2M.5 1.9h2.6M.3 3.3h3.1M.6 2.6l.5.4" stroke="rgb(40,40,160)" stroke-width=".66" fill="none"/><path transform="translate(4.2 0)" d="M.2.5h3.4M1.8.5v3M1 2l.5 1M2.3 1.6l.9.6M.6 3.3h2.6" stroke="rgb(40,40,160)" stroke-width=".66" fill="none"/><path transform="translate(8.4 0)" d="M.2.5h1.4M.9.2v3.2M.2 2h1.4M.3 3.2h1.3M2 .5h1.6M2.1 1.5h1.5M2.1 2.5h1.5M2.8.3v3.2" stroke="rgb(40,40,160)" stroke-width=".66" fill="none"/><path transform="translate(12.6 0)" d="M.5.3v3.2M.2 1.3h1M1.6.6h1.9M2.5.6v2.9M1.5 2.1h2M1.4 3.4h2.2" stroke="rgb(40,40,160)" stroke-width=".66" fill="none"/></pattern><pattern id="p4" width="16.8" height="3.6" patternUnits="userSpaceOnUse"><path transform="translate(0.0 0)" d="M.3.5h3M1.8.3v3.2M.5 1.9h2.6M.3 3.3h3.1M.6 2.6l.5.4" stroke="rgb(30,30,200)" stroke-width=".66" fill="none"/><path transform="translate(4.2 0)" d="M.2.5h3.4M1.8.5v3M1 2l.5 1M2.3 1.6l.9.6M.6 3.3h2.6" stroke="rgb(30,30,200)" stroke-width=".66" fill="none"/><path transform="translate(8.4 0)" d="M.2.5h1.4M.9.2v3.2M.2 2h1.4M.3 3.2h1.3M2 .5h1.6M2.1 1.5h1.5M2.1 2.5h1.5M2.8.3v3.2" stroke="rgb(30,30,200)" stroke-width=".66" fill="none"/><path transform="translate(12.6 0)" d="M.5.3v3.2M.2 1.3h1M1.6.6h1.9M2.5.6v2.9M1.5 2.1h2M1.4 3.4h2.2" stroke="rgb(30,30,200)" stroke-width=".66" fill="none"/></pattern><pattern id="p5" width="16.8" height="3.6" patternUnits="userSpaceOnUse"><path transform="translate(0.0 0)" d="M.3.5h3M1.8.3v3.2M.5 1.9h2.6M.3 3.3h3.1M.6 2.6l.5.4" stroke="rgb(40,40,170)" stroke-width=".66" fill="none"/><path transform="translate(4.2 0)" d="M.2.5h3.4M1.8.5v3M1 2l.5 1M2.3 1.6l.9.6M.6 3.3h2.6" stroke="rgb(40,40,170)" stroke-width=".66" fill="none"/><path transform="translate(8.4 0)" d="M.2.5h1.4M.9.2v3.2M.2 2h1.4M.3 3.2h1.3M2 .5h1.6M2.1 1.5h1.5M2.1 2.5h1.5M2.8.3v3.2" stroke="rgb(40,40,170)" stroke-width=".66" fill="none"/><path transform="translate(12.6 0)" d="M.5.3v3.2M.2 1.3h1M1.6.6h1.9M2.5.6v2.9M1.5 2.1h2M1.4 3.4h2.2" stroke="rgb(40,40,170)" stroke-width=".66" fill="none"/></pattern><pattern id="p6" width="16.8" height="3.6" patternUnits="userSpaceOnUse"><path transform="translate(0.0 0)" d="M.3.5h3M1.8.3v3.2M.5 1.9h2.6M.3 3.3h3.1M.6 2.6l.5.4" stroke="rgb(235,235,235)" stroke-width=".66" fill="none"/><path transform="translate(4.2 0)" d="M.2.5h3.4M1.8.5v3M1 2l.5 1M2.3 1.6l.9.6M.6 3.3h2.6" stroke="rgb(235,235,235)" stroke-width=".66" fill="none"/><path transform="translate(8.4 0)" d="M.2.5h1.4M.9.2v3.2M.2 2h1.4M.3 3.2h1.3M2 .5h1.6M2.1 1.5h1.5M2.1 2.5h1.5M2.8.3v3.2" stroke="rgb(235,235,235)" stroke-width=".66" fill="none"/><path transform="translate(12.6 0)" d="M.5.3v3.2M.2 1.3h1M1.6.6h1.9M2.5.6v2.9M1.5 2.1h2M1.4 3.4h2.2" stroke="rgb(235,235,235)" stroke-width=".66" fill="none"/></pattern><pattern id="p7" width="16.8" height="3.6" patternUnits="userSpaceOnUse"><path transform="translate(0.0 0)" d="M.3.5h3M1.8.3v3.2M.5 1.9h2.6M.3 3.3h3.1M.6 2.6l.5.4" stroke="rgb(230,230,230)" stroke-width=".66" fill="none"/><path transform="translate(4.2 0)" d="M.2.5h3.4M1.8.5v3M1 2l.5 1M2.3 1.6l.9.6M.6 3.3h2.6" stroke="rgb(230,230,230)" stroke-width=".66" fill="none"/><path transform="translate(8.4 0)" d="M.2.5h1.4M.9.2v3.2M.2 2h1.4M.3 3.2h1.3M2 .5h1.6M2.1 1.5h1.5M2.1 2.5h1.5M2.8.3v3.2" stroke="rgb(230,230,230)" stroke-width=".66" fill="none"/><path transform="translate(12.6 0)" d="M.5.3v3.2M.2 1.3h1M1.6.6h1.9M2.5.6v2.9M1.5 2.1h2M1.4 3.4h2.2" stroke="rgb(230,230,230)" stroke-width=".66" fill="none"/></pattern></defs></svg>
</body></html>
